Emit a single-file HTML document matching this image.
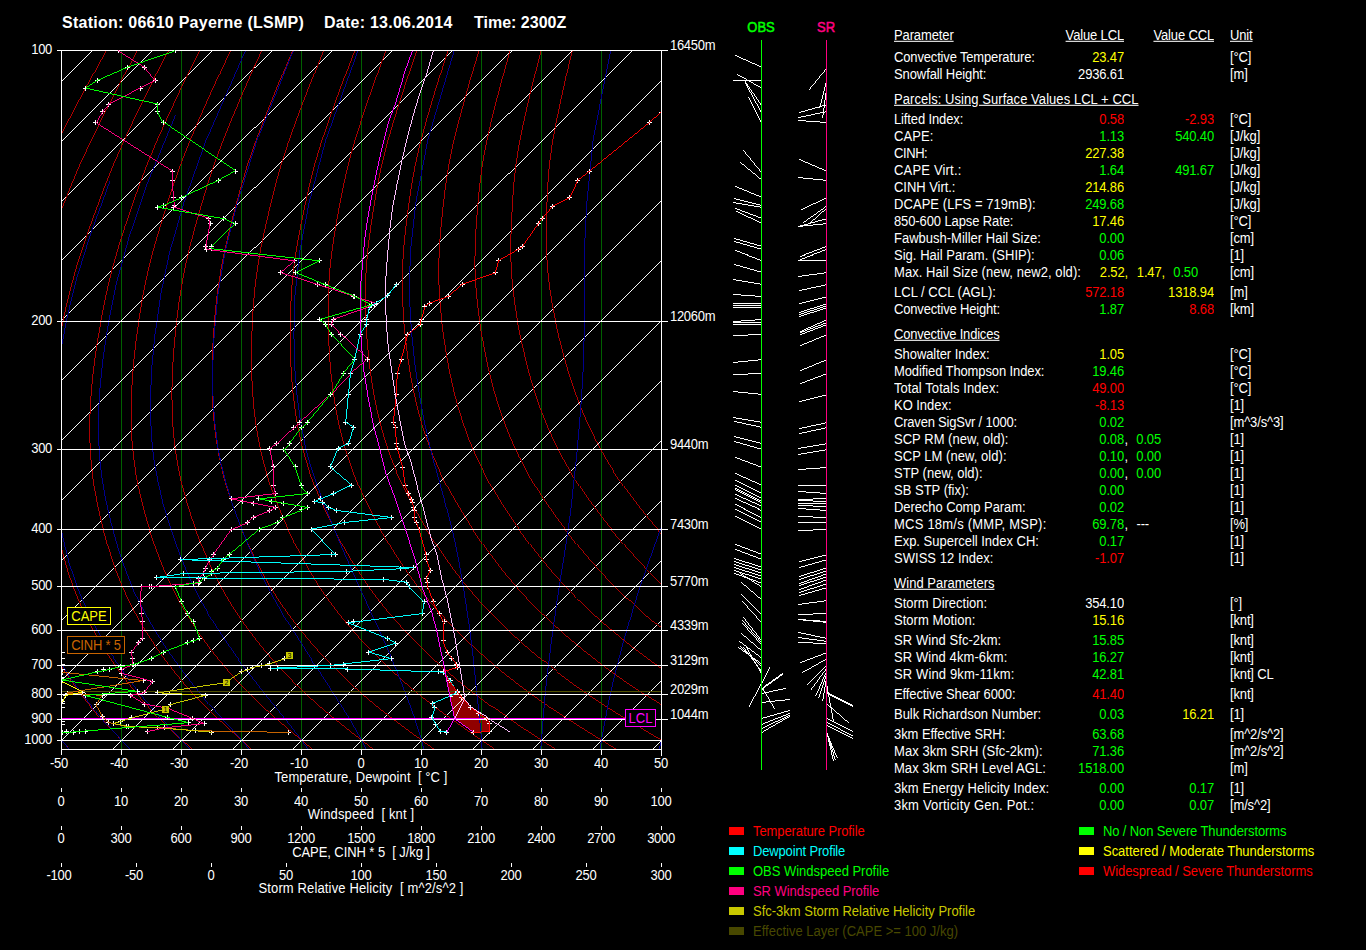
<!DOCTYPE html><html><head><meta charset="utf-8"><title>Sounding 06610 Payerne</title>
<style>
html,body{margin:0;padding:0;background:#000;}
body{width:1366px;height:950px;overflow:hidden;position:relative;font-family:"Liberation Sans",sans-serif;color:#fff;}
.t{position:absolute;white-space:pre;font-size:13px;line-height:15px;height:15px;transform:scaleY(1.06);transform-origin:50% 0;}
.p{letter-spacing:-0.15px;}
.r{text-align:right;}
.c{text-align:center;}
.u{text-decoration:underline;text-underline-offset:1px;}
.ax{font-size:13px;transform:scaleY(1.08);transform-origin:50% 80%;}
.g{color:#00ff00}.y{color:#ffff00}.rd{color:#ff0000}
svg{position:absolute;left:0;top:0;}
.sw{position:absolute;width:15px;height:8px;}
</style></head><body>
<svg width="1366" height="950" viewBox="0 0 1366 950" shape-rendering="crispEdges">
<defs><clipPath id="cp"><rect x="61" y="50" width="601" height="700"/></clipPath></defs>
<g clip-path="url(#cp)">
<polygon points="473.4,732.2 489.0,731.8 489.5,723.2 486.8,718.7 478.8,713.4 470.7,707.1 461.8,697.3 457.3,691.9 449.2,680.6 444.5,672.0 447.4,683.8 451.0,701.7 454.6,718.7" fill="#900000" stroke="none"/>
<line x1="121.5" y1="50.5" x2="121.5" y2="749.5" stroke="#006000" stroke-width="1"/>
<line x1="181.5" y1="50.5" x2="181.5" y2="749.5" stroke="#006000" stroke-width="1"/>
<line x1="241.5" y1="50.5" x2="241.5" y2="749.5" stroke="#006000" stroke-width="1"/>
<line x1="301.5" y1="50.5" x2="301.5" y2="749.5" stroke="#006000" stroke-width="1"/>
<line x1="361.5" y1="50.5" x2="361.5" y2="749.5" stroke="#006000" stroke-width="1"/>
<line x1="421.5" y1="50.5" x2="421.5" y2="749.5" stroke="#006000" stroke-width="1"/>
<line x1="481.5" y1="50.5" x2="481.5" y2="749.5" stroke="#006000" stroke-width="1"/>
<line x1="541.5" y1="50.5" x2="541.5" y2="749.5" stroke="#006000" stroke-width="1"/>
<line x1="601.5" y1="50.5" x2="601.5" y2="749.5" stroke="#006000" stroke-width="1"/>
<line x1="-667.5" y1="749.5" x2="31.5" y2="50.5" stroke="#ffffff" stroke-width="0.99"/>
<line x1="-607.5" y1="749.5" x2="91.5" y2="50.5" stroke="#ffffff" stroke-width="0.99"/>
<line x1="-547.5" y1="749.5" x2="151.5" y2="50.5" stroke="#ffffff" stroke-width="0.99"/>
<line x1="-487.5" y1="749.5" x2="211.5" y2="50.5" stroke="#ffffff" stroke-width="0.99"/>
<line x1="-427.5" y1="749.5" x2="271.5" y2="50.5" stroke="#ffffff" stroke-width="0.99"/>
<line x1="-367.5" y1="749.5" x2="331.5" y2="50.5" stroke="#ffffff" stroke-width="0.99"/>
<line x1="-307.5" y1="749.5" x2="391.5" y2="50.5" stroke="#ffffff" stroke-width="0.99"/>
<line x1="-247.5" y1="749.5" x2="451.5" y2="50.5" stroke="#ffffff" stroke-width="0.99"/>
<line x1="-187.5" y1="749.5" x2="511.5" y2="50.5" stroke="#ffffff" stroke-width="0.99"/>
<line x1="-127.5" y1="749.5" x2="571.5" y2="50.5" stroke="#ffffff" stroke-width="0.99"/>
<line x1="-67.5" y1="749.5" x2="631.5" y2="50.5" stroke="#ffffff" stroke-width="0.99"/>
<line x1="-7.5" y1="749.5" x2="691.5" y2="50.5" stroke="#ffffff" stroke-width="0.99"/>
<line x1="52.5" y1="749.5" x2="751.5" y2="50.5" stroke="#ffffff" stroke-width="0.99"/>
<line x1="112.5" y1="749.5" x2="811.5" y2="50.5" stroke="#ffffff" stroke-width="0.99"/>
<line x1="172.5" y1="749.5" x2="871.5" y2="50.5" stroke="#ffffff" stroke-width="0.99"/>
<line x1="232.5" y1="749.5" x2="931.5" y2="50.5" stroke="#ffffff" stroke-width="0.99"/>
<line x1="292.5" y1="749.5" x2="991.5" y2="50.5" stroke="#ffffff" stroke-width="0.99"/>
<line x1="352.5" y1="749.5" x2="1051.5" y2="50.5" stroke="#ffffff" stroke-width="0.99"/>
<line x1="412.5" y1="749.5" x2="1111.5" y2="50.5" stroke="#ffffff" stroke-width="0.99"/>
<line x1="472.5" y1="749.5" x2="1171.5" y2="50.5" stroke="#ffffff" stroke-width="0.99"/>
<line x1="532.5" y1="749.5" x2="1231.5" y2="50.5" stroke="#ffffff" stroke-width="0.99"/>
<line x1="592.5" y1="749.5" x2="1291.5" y2="50.5" stroke="#ffffff" stroke-width="0.99"/>
<line x1="652.5" y1="749.5" x2="1351.5" y2="50.5" stroke="#ffffff" stroke-width="0.99"/>
<polyline points="105.8,50.5 93.3,73.7 80.9,96.9 68.6,120.2 56.8,143.2 46.2,165.1 36.8,186.0 28.1,206.4 19.6,226.8 11.6,246.9 4.3,266.4 -2.1,285.3 -7.8,303.6 -13.0,321.5 -17.7,339.3 -22.1,356.9 -26.1,374.3 -29.5,391.4 -32.5,408.1 -34.9,424.6 -36.7,440.6 -37.8,456.3 -38.3,471.5 -38.3,486.3 -37.7,500.9 -36.7,515.3 -35.3,529.5 -33.5,543.7 -31.4,557.6 -28.8,571.4 -25.7,584.9 -22.1,598.2 -17.9,611.1 -13.1,623.7 -7.9,636.1 -2.2,648.4 4.0,660.4 10.6,672.2 17.8,683.9 25.4,695.3 33.6,706.5 42.3,717.4 51.3,728.3 60.7,739.2 70.3,750.2" fill="none" stroke="#b00000" stroke-width="0.99" />
<polyline points="136.9,50.5 124.8,73.7 112.9,96.9 101.1,120.2 89.9,143.2 79.7,165.1 70.9,186.0 62.7,206.4 54.7,226.8 47.2,246.9 40.5,266.4 34.6,285.3 29.5,303.6 24.9,321.5 20.7,339.3 17.0,356.9 13.6,374.3 10.8,391.4 8.4,408.1 6.7,424.6 5.5,440.6 5.0,456.3 5.2,471.5 5.9,486.3 7.1,500.9 8.8,515.3 10.9,529.5 13.4,543.7 16.2,557.6 19.6,571.4 23.4,584.9 27.8,598.2 32.8,611.1 38.3,623.7 44.3,636.1 50.9,648.4 57.8,660.4 65.3,672.2 73.3,683.9 81.8,695.3 90.8,706.5 100.4,717.4 110.3,728.3 120.6,739.2 131.1,750.2" fill="none" stroke="#b00000" stroke-width="0.99" />
<polyline points="168.0,50.5 156.4,73.7 144.9,96.9 133.6,120.2 122.9,143.2 113.3,165.1 104.9,186.0 97.3,206.4 89.8,226.8 82.9,246.9 76.7,266.4 71.4,285.3 66.8,303.6 62.8,321.5 59.2,339.3 56.0,356.9 53.3,374.3 51.0,391.4 49.3,408.1 48.2,424.6 47.7,440.6 47.8,456.3 48.6,471.5 50.0,486.3 52.0,500.9 54.4,515.3 57.2,529.5 60.3,543.7 63.9,557.6 67.9,571.4 72.5,584.9 77.7,598.2 83.5,611.1 89.8,623.7 96.6,636.1 103.9,648.4 111.7,660.4 120.0,672.2 128.8,683.9 138.1,695.3 148.1,706.5 158.5,717.4 169.3,728.3 180.5,739.2 192.0,750.2" fill="none" stroke="#b00000" stroke-width="0.99" />
<polyline points="199.0,50.5 187.9,73.7 177.0,96.9 166.2,120.2 155.9,143.2 146.8,165.1 139.0,186.0 131.8,206.4 124.9,226.8 118.5,246.9 112.9,266.4 108.2,285.3 104.2,303.6 100.7,321.5 97.7,339.3 95.1,356.9 93.0,374.3 91.3,391.4 90.2,408.1 89.7,424.6 89.9,440.6 90.7,456.3 92.1,471.5 94.2,486.3 96.8,500.9 99.9,515.3 103.4,529.5 107.3,543.7 111.6,557.6 116.3,571.4 121.7,584.9 127.6,598.2 134.1,611.1 141.2,623.7 148.8,636.1 156.9,648.4 165.5,660.4 174.7,672.2 184.3,683.9 194.5,695.3 205.3,706.5 216.6,717.4 228.4,728.3 240.4,739.2 252.8,750.2" fill="none" stroke="#b00000" stroke-width="0.99" />
<polyline points="230.1,50.5 219.5,73.7 209.0,96.9 198.7,120.2 189.0,143.2 180.4,165.1 173.0,186.0 166.4,206.4 160.1,226.8 154.2,246.9 149.1,266.4 144.9,285.3 141.5,303.6 138.6,321.5 136.2,339.3 134.2,356.9 132.7,374.3 131.6,391.4 131.1,408.1 131.3,424.6 132.0,440.6 133.5,456.3 135.6,471.5 138.3,486.3 141.6,500.9 145.4,515.3 149.6,529.5 154.2,543.7 159.2,557.6 164.7,571.4 170.8,584.9 177.5,598.2 184.8,611.1 192.6,623.7 201.0,636.1 209.9,648.4 219.4,660.4 229.3,672.2 239.8,683.9 250.9,695.3 262.6,706.5 274.7,717.4 287.4,728.3 300.4,739.2 313.7,750.2" fill="none" stroke="#b00000" stroke-width="0.99" />
<polyline points="261.2,50.5 251.1,73.7 241.1,96.9 231.2,120.2 222.0,143.2 213.9,165.1 207.1,186.0 201.0,206.4 195.2,226.8 189.8,246.9 185.3,266.4 181.7,285.3 178.8,303.6 176.5,321.5 174.7,339.3 173.3,356.9 172.3,374.3 171.9,391.4 172.1,408.1 172.8,424.6 174.2,440.6 176.3,456.3 179.1,471.5 182.5,486.3 186.5,500.9 190.9,515.3 195.8,529.5 201.1,543.7 206.9,557.6 213.1,571.4 219.9,584.9 227.4,598.2 235.4,611.1 244.1,623.7 253.3,636.1 263.0,648.4 273.2,660.4 284.0,672.2 295.3,683.9 307.3,695.3 319.8,706.5 332.9,717.4 346.4,728.3 360.3,739.2 374.5,750.2" fill="none" stroke="#b00000" stroke-width="0.99" />
<polyline points="292.3,50.5 282.6,73.7 273.1,96.9 263.8,120.2 255.0,143.2 247.4,165.1 241.2,186.0 235.6,206.4 230.3,226.8 225.5,246.9 221.5,266.4 218.4,285.3 216.1,303.6 214.4,321.5 213.2,339.3 212.3,356.9 212.0,374.3 212.2,391.4 213.0,408.1 214.3,424.6 216.4,440.6 219.1,456.3 222.6,471.5 226.6,486.3 231.3,500.9 236.4,515.3 242.0,529.5 248.1,543.7 254.5,557.6 261.5,571.4 269.1,584.9 277.3,598.2 286.1,611.1 295.5,623.7 305.5,636.1 316.0,648.4 327.1,660.4 338.7,672.2 350.9,683.9 363.6,695.3 377.0,706.5 391.0,717.4 405.4,728.3 420.2,739.2 435.3,750.2" fill="none" stroke="#b00000" stroke-width="0.99" />
<polyline points="323.3,50.5 314.2,73.7 305.1,96.9 296.3,120.2 288.1,143.2 281.0,165.1 275.2,186.0 270.2,206.4 265.4,226.8 261.1,246.9 257.7,266.4 255.2,285.3 253.5,303.6 252.3,321.5 251.7,339.3 251.4,356.9 251.7,374.3 252.5,391.4 253.9,408.1 255.9,424.6 258.6,440.6 262.0,456.3 266.1,471.5 270.8,486.3 276.1,500.9 282.0,515.3 288.3,529.5 295.0,543.7 302.2,557.6 309.9,571.4 318.2,584.9 327.1,598.2 336.7,611.1 346.9,623.7 357.7,636.1 369.0,648.4 380.9,660.4 393.4,672.2 406.4,683.9 420.0,695.3 434.3,706.5 449.1,717.4 464.4,728.3 480.1,739.2 496.2,750.2" fill="none" stroke="#b00000" stroke-width="0.99" />
<polyline points="354.4,50.5 345.7,73.7 337.2,96.9 328.8,120.2 321.1,143.2 314.5,165.1 309.3,186.0 304.8,206.4 300.5,226.8 296.8,246.9 293.9,266.4 292.0,285.3 290.8,303.6 290.2,321.5 290.1,339.3 290.5,356.9 291.4,374.3 292.8,391.4 294.8,408.1 297.4,424.6 300.7,440.6 304.8,456.3 309.5,471.5 314.9,486.3 321.0,500.9 327.5,515.3 334.5,529.5 341.9,543.7 349.8,557.6 358.3,571.4 367.3,584.9 377.0,598.2 387.4,611.1 398.4,623.7 409.9,636.1 422.1,648.4 434.8,660.4 448.0,672.2 461.9,683.9 476.4,695.3 491.5,706.5 507.2,717.4 523.4,728.3 540.0,739.2 557.0,750.2" fill="none" stroke="#b00000" stroke-width="0.99" />
<polyline points="385.5,50.5 377.3,73.7 369.2,96.9 361.4,120.2 354.1,143.2 348.1,165.1 343.3,186.0 339.3,206.4 335.6,226.8 332.5,246.9 330.1,266.4 328.7,285.3 328.1,303.6 328.1,321.5 328.6,339.3 329.6,356.9 331.0,374.3 333.1,391.4 335.7,408.1 339.0,424.6 342.9,440.6 347.6,456.3 353.0,471.5 359.1,486.3 365.8,500.9 373.0,515.3 380.7,529.5 388.9,543.7 397.5,557.6 406.7,571.4 416.5,584.9 426.9,598.2 438.0,611.1 449.8,623.7 462.2,636.1 475.1,648.4 488.6,660.4 502.7,672.2 517.4,683.9 532.7,695.3 548.7,706.5 565.3,717.4 582.4,728.3 600.0,739.2 617.9,750.2" fill="none" stroke="#b00000" stroke-width="0.99" />
<polyline points="416.6,50.5 408.8,73.7 401.3,96.9 393.9,120.2 387.2,143.2 381.6,165.1 377.4,186.0 373.9,206.4 370.8,226.8 368.1,246.9 366.3,266.4 365.5,285.3 365.5,303.6 366.0,321.5 367.1,339.3 368.6,356.9 370.7,374.3 373.3,391.4 376.6,408.1 380.5,424.6 385.1,440.6 390.4,456.3 396.5,471.5 403.3,486.3 410.6,500.9 418.5,515.3 426.9,529.5 435.8,543.7 445.1,557.6 455.1,571.4 465.6,584.9 476.8,598.2 488.7,611.1 501.2,623.7 514.4,636.1 528.1,648.4 542.5,660.4 557.4,672.2 572.9,683.9 589.1,695.3 606.0,706.5 623.5,717.4 641.4,728.3 659.9,739.2 678.7,750.2" fill="none" stroke="#b00000" stroke-width="0.99" />
<polyline points="447.7,50.5 440.4,73.7 433.3,96.9 426.5,120.2 420.2,143.2 415.2,165.1 411.5,186.0 408.5,206.4 405.9,226.8 403.8,246.9 402.5,266.4 402.2,285.3 402.8,303.6 403.9,321.5 405.6,339.3 407.7,356.9 410.4,374.3 413.6,391.4 417.5,408.1 422.0,424.6 427.3,440.6 433.3,456.3 440.0,471.5 447.4,486.3 455.5,500.9 464.1,515.3 473.2,529.5 482.7,543.7 492.8,557.6 503.4,571.4 514.7,584.9 526.7,598.2 539.4,611.1 552.7,623.7 566.6,636.1 581.2,648.4 596.3,660.4 612.1,672.2 628.4,683.9 645.5,695.3 663.2,706.5 681.6,717.4 700.5,728.3 719.8,739.2 739.6,750.2" fill="none" stroke="#b00000" stroke-width="0.99" />
<polyline points="478.7,50.5 471.9,73.7 465.4,96.9 459.0,120.2 453.2,143.2 448.7,165.1 445.5,186.0 443.1,206.4 441.0,226.8 439.4,246.9 438.7,266.4 439.0,285.3 440.1,303.6 441.8,321.5 444.1,339.3 446.8,356.9 450.1,374.3 453.9,391.4 458.4,408.1 463.6,424.6 469.4,440.6 476.1,456.3 483.5,471.5 491.6,486.3 500.3,500.9 509.6,515.3 519.4,529.5 529.7,543.7 540.5,557.6 551.8,571.4 563.9,584.9 576.6,598.2 590.0,611.1 604.1,623.7 618.8,636.1 634.2,648.4 650.2,660.4 666.7,672.2 684.0,683.9 701.9,695.3 720.5,706.5 739.7,717.4 759.5,728.3 779.7,739.2 800.4,750.2" fill="none" stroke="#b00000" stroke-width="0.99" />
<polyline points="509.8,50.5 503.5,73.7 497.4,96.9 491.5,120.2 486.3,143.2 482.2,165.1 479.6,186.0 477.7,206.4 476.1,226.8 475.1,246.9 474.9,266.4 475.8,285.3 477.4,303.6 479.7,321.5 482.6,339.3 485.9,356.9 489.7,374.3 494.2,391.4 499.3,408.1 505.1,424.6 511.6,440.6 518.9,456.3 527.0,471.5 535.7,486.3 545.1,500.9 555.1,515.3 565.6,529.5 576.6,543.7 588.1,557.6 600.2,571.4 613.0,584.9 626.5,598.2 640.7,611.1 655.5,623.7 671.1,636.1 687.2,648.4 704.0,660.4 721.4,672.2 739.5,683.9 758.2,695.3 777.7,706.5 797.8,717.4 818.5,728.3 839.6,739.2 861.2,750.2" fill="none" stroke="#b00000" stroke-width="0.99" />
<polyline points="540.9,50.5 535.1,73.7 529.4,96.9 524.1,120.2 519.3,143.2 515.8,165.1 513.6,186.0 512.3,206.4 511.2,226.8 510.7,246.9 511.1,266.4 512.5,285.3 514.8,303.6 517.6,321.5 521.0,339.3 525.0,356.9 529.4,374.3 534.5,391.4 540.2,408.1 546.6,424.6 553.8,440.6 561.7,456.3 570.4,471.5 579.9,486.3 589.9,500.9 600.6,515.3 611.8,529.5 623.5,543.7 635.8,557.6 648.6,571.4 662.1,584.9 676.4,598.2 691.3,611.1 707.0,623.7 723.3,636.1 740.3,648.4 757.9,660.4 776.1,672.2 795.0,683.9 814.6,695.3 834.9,706.5 855.9,717.4 877.5,728.3 899.6,739.2 922.1,750.2" fill="none" stroke="#b00000" stroke-width="0.99" />
<polyline points="572.0,50.5 566.6,73.7 561.5,96.9 556.6,120.2 552.3,143.2 549.3,165.1 547.7,186.0 546.8,206.4 546.3,226.8 546.4,246.9 547.3,266.4 549.3,285.3 552.1,303.6 555.6,321.5 559.5,339.3 564.0,356.9 569.1,374.3 574.8,391.4 581.1,408.1 588.2,424.6 596.0,440.6 604.6,456.3 613.9,471.5 624.0,486.3 634.8,500.9 646.1,515.3 658.0,529.5 670.5,543.7 683.4,557.6 697.0,571.4 711.3,584.9 726.3,598.2 742.0,611.1 758.4,623.7 775.5,636.1 793.3,648.4 811.7,660.4 830.8,672.2 850.5,683.9 871.0,695.3 892.2,706.5 914.0,717.4 936.5,728.3 959.5,739.2 982.9,750.2" fill="none" stroke="#b00000" stroke-width="0.99" />
<polyline points="70.1,750.2 66.7,746.3 63.2,742.2 59.8,738.1 56.6,734.4 53.0,730.2 49.4,725.8 45.8,721.4 42.1,716.9 38.5,712.2 35.1,707.9 31.4,703.0 27.8,698.0 24.1,692.7 20.5,687.3 16.9,681.6 13.6,676.4 10.1,670.3 6.6,664.0 3.1,657.5 -0.4,650.8 -3.8,643.7 -7.1,636.4 -10.1,629.5 -13.3,621.6 -16.4,613.2 -19.4,604.5 -22.3,595.3 -24.9,585.5 -27.1,576.2 -29.3,565.3 -31.3,553.8 -33.1,541.6 -34.7,528.7 -36.0,515.0 -36.9,502.0 -37.5,486.5 -37.6,469.7 -36.8,451.3 -34.9,431.0 -31.8,408.5 -27.8,386.1 -21.7,358.5 -13.9,327.6 -3.8,292.8" fill="none" stroke="#000090" stroke-width="0.99" />
<polyline points="130.6,750.2 127.0,746.3 123.3,742.2 119.6,738.1 115.5,733.6 111.7,729.3 107.8,725.0 103.9,720.5 99.9,716.0 96.0,711.3 91.9,706.5 87.5,701.0 83.5,695.9 79.5,690.6 75.5,685.0 71.5,679.3 67.5,673.4 63.6,667.2 59.6,660.8 55.3,653.5 51.4,646.6 47.6,639.4 43.8,631.8 40.1,624.0 36.4,615.8 32.8,607.2 29.1,597.1 25.8,587.5 22.8,577.3 19.9,566.5 17.3,555.0 14.9,542.9 12.6,530.0 10.6,516.4 8.7,500.5 7.4,484.9 6.6,467.9 6.7,449.4 7.8,428.9 10.2,406.1 14.0,380.8 20.0,349.6 27.4,317.6 37.3,281.3 51.9,238.1" fill="none" stroke="#000090" stroke-width="0.99" />
<polyline points="190.7,750.2 187.1,746.3 183.0,741.8 179.2,737.7 175.0,733.1 171.0,728.9 167.0,724.5 162.5,719.6 158.4,715.0 154.2,710.3 149.5,705.0 145.2,700.0 140.5,694.3 136.2,688.9 131.9,683.3 127.1,676.9 122.8,670.9 118.0,664.0 113.7,657.5 109.4,650.8 104.6,643.0 100.3,635.6 96.1,628.0 91.5,619.1 87.4,610.7 82.9,600.8 79.0,591.4 75.3,581.4 71.5,569.8 68.1,558.5 64.7,545.3 61.8,532.6 59.0,519.2 56.2,503.5 54.1,488.1 52.3,469.7 51.4,451.3 51.6,431.0 53.1,406.1 55.9,380.8 60.3,352.6 67.1,317.6 75.8,281.3 90.8,233.3 110.0,181.0" fill="none" stroke="#000090" stroke-width="0.99" />
<polyline points="250.1,750.2 246.4,745.9 242.9,741.8 239.0,737.3 235.3,733.1 231.1,728.4 226.8,723.6 222.8,719.2 218.3,714.1 213.6,708.9 209.3,704.0 204.5,698.5 200.1,693.2 195.2,687.3 190.2,681.0 185.7,675.2 180.6,668.4 176.0,662.1 170.9,654.8 165.7,647.3 161.0,640.1 155.8,631.8 150.7,623.2 146.0,614.9 141.0,605.4 136.5,596.2 131.7,585.5 127.1,574.1 123.0,563.1 118.8,550.2 115.1,537.8 111.2,523.3 107.5,507.9 104.4,492.8 101.5,474.9 99.6,457.0 98.4,435.3 98.6,410.9 100.1,386.1 103.4,355.6 108.8,321.0 115.9,285.2 128.8,238.1 146.0,186.6 175.5,115.1" fill="none" stroke="#000090" stroke-width="0.99" />
<polyline points="308.6,750.2 305.6,745.9 302.4,741.4 299.4,737.3 295.9,732.7 292.3,728.0 288.5,723.2 284.5,718.2 280.8,713.6 276.6,708.4 272.2,703.0 267.7,697.4 263.1,691.6 258.8,686.1 254.0,679.9 249.0,673.4 244.0,666.6 238.8,659.5 234.0,652.8 228.7,645.1 223.2,637.1 217.7,628.7 212.2,619.9 207.2,611.5 201.6,601.8 196.2,591.4 190.8,580.4 186.0,569.8 181.0,557.3 176.0,544.1 171.2,530.0 166.5,515.0 162.4,500.5 158.3,483.2 154.7,464.4 152.1,443.5 150.6,420.1 150.5,396.3 151.8,367.1 155.0,334.1 160.3,296.5 169.7,252.0 183.9,202.8 207.3,136.8 245.0,50.5" fill="none" stroke="#000090" stroke-width="0.99" />
<polyline points="366.5,750.2 364.4,745.9 362.1,741.4 360.0,737.3 357.5,732.7 354.8,728.0 352.0,723.2 349.1,718.2 346.3,713.6 343.0,708.4 339.6,703.0 336.0,697.4 332.3,691.6 328.8,686.1 324.8,679.9 320.6,673.4 316.3,666.6 311.7,659.5 307.4,652.8 302.5,645.1 297.4,637.1 292.1,628.7 286.6,619.9 281.5,611.5 275.8,601.8 270.1,591.4 264.3,580.4 259.1,569.8 253.4,557.3 247.7,544.1 242.0,530.0 236.4,515.0 231.4,500.5 226.1,483.2 221.3,464.4 217.4,443.5 214.5,420.1 213.0,396.3 212.7,367.1 214.2,334.1 217.6,296.5 225.1,252.0 237.3,202.8 258.1,136.8 293.0,50.5" fill="none" stroke="#000090" stroke-width="0.99" />
<polyline points="424.2,750.2 423.0,745.9 421.8,741.4 420.7,737.3 419.3,732.7 417.8,728.0 416.2,723.2 414.6,718.2 413.0,713.6 411.1,708.4 409.1,703.0 407.0,697.4 404.8,691.6 402.7,686.1 400.3,679.9 397.8,673.4 395.1,666.6 392.2,659.5 389.3,652.8 386.0,645.1 382.5,637.1 378.7,628.7 374.7,619.9 370.8,611.5 366.2,601.8 361.4,591.4 356.4,580.4 351.6,569.8 346.2,557.3 340.5,544.1 334.6,530.0 328.4,515.0 322.7,500.5 316.4,483.2 310.3,464.4 304.9,443.5 300.3,420.1 297.1,396.3 294.7,367.1 293.9,334.1 294.9,296.5 299.6,252.0 309.1,202.8 326.6,136.8 357.7,50.5" fill="none" stroke="#000090" stroke-width="0.99" />
<polyline points="482.1,750.2 481.9,745.9 481.6,741.4 481.3,737.3 480.9,732.7 480.5,728.0 480.0,723.2 479.5,718.2 479.1,713.6 478.5,708.4 477.9,703.0 477.3,697.4 476.7,691.6 476.1,686.1 475.5,679.9 474.8,673.4 474.1,666.6 473.4,659.5 472.6,652.8 471.7,645.1 470.7,637.1 469.6,628.7 468.4,619.9 467.1,611.5 465.6,601.8 464.0,591.4 462.2,580.4 460.3,569.8 458.1,557.3 455.4,544.1 452.3,530.0 448.5,515.0 444.6,500.5 439.8,483.2 434.6,464.4 429.3,443.5 424.0,420.1 419.6,396.3 415.2,367.1 411.7,334.1 409.4,296.5 410.3,252.0 415.8,202.8 428.4,136.8 453.9,50.5" fill="none" stroke="#000090" stroke-width="0.99" />
<polyline points="540.6,750.2 541.0,745.9 541.4,741.4 541.7,737.3 542.1,732.7 542.5,728.0 542.8,723.2 543.2,718.2 543.6,713.6 544.0,708.4 544.4,703.0 544.9,697.4 545.4,691.6 546.0,686.1 546.7,679.9 547.4,673.4 548.2,666.6 549.1,659.5 550.0,652.8 550.9,645.1 552.0,637.1 553.1,628.7 554.3,619.9 555.5,611.5 556.9,601.8 558.5,591.4 560.2,580.4 561.9,569.8 563.9,557.3 566.0,544.1 568.1,530.0 570.1,515.0 571.8,500.5 573.7,483.2 575.7,464.4 577.7,443.5 579.8,420.1 581.6,396.3 583.3,367.1 584.2,334.1 584.0,296.5 584.3,252.0 586.8,202.8 593.4,136.8 610.5,50.5" fill="none" stroke="#000090" stroke-width="0.99" />
<polyline points="599.7,750.2 600.5,745.9 601.3,741.4 602.0,737.3 602.9,732.7 603.7,728.0 604.6,723.2 605.5,718.2 606.4,713.6 607.4,708.4 608.5,703.0 609.6,697.4 610.9,691.6 612.1,686.1 613.6,679.9 615.2,673.4 616.9,666.6 618.7,659.5 620.5,652.8 622.5,645.1 624.8,637.1 627.1,628.7 629.7,619.9 632.3,611.5 635.3,601.8 638.6,591.4 642.3,580.4 646.0,569.8 650.4,557.3 655.1,544.1 660.2,530.0 665.7,515.0 671.1,500.5 677.5,483.2 684.8,464.4 693.1,443.5 702.7,420.1 712.8,396.3 725.3,367.1 739.4,334.1 755.1,296.5 774.0,252.0 794.9,202.8 821.8,136.8 855.2,50.5" fill="none" stroke="#000090" stroke-width="0.99" />
<polyline points="659.1,750.2 660.1,745.9 661.2,741.4 662.2,737.3 663.3,732.7 664.4,728.0 665.6,723.2 666.8,718.2 668.0,713.6 669.3,708.4 670.7,703.0 672.2,697.4 673.8,691.6 675.4,686.1 677.3,679.9 679.3,673.4 681.5,666.6 683.8,659.5 686.0,652.8 688.6,645.1 691.4,637.1 694.4,628.7 697.7,619.9 700.9,611.5 704.6,601.8 708.8,591.4 713.4,580.4 717.9,569.8 723.3,557.3 729.2,544.1 735.6,530.0 742.5,515.0 749.3,500.5 757.6,483.2 766.8,464.4 777.5,443.5 789.9,420.1 802.8,396.3 819.2,367.1 838.1,334.1 859.9,296.5 886.7,252.0 917.5,202.8 960.0,136.8 1017.7,50.5" fill="none" stroke="#000090" stroke-width="0.99" />
</g>
<line x1="56.5" y1="50.5" x2="667.5" y2="50.5" stroke="#ffffff" stroke-width="1"/>
<line x1="56.5" y1="321.5" x2="667.5" y2="321.5" stroke="#ffffff" stroke-width="1"/>
<line x1="56.5" y1="449.5" x2="667.5" y2="449.5" stroke="#ffffff" stroke-width="1"/>
<line x1="56.5" y1="529.5" x2="667.5" y2="529.5" stroke="#ffffff" stroke-width="1"/>
<line x1="56.5" y1="586.5" x2="667.5" y2="586.5" stroke="#ffffff" stroke-width="1"/>
<line x1="56.5" y1="630.5" x2="667.5" y2="630.5" stroke="#ffffff" stroke-width="1"/>
<line x1="56.5" y1="665.5" x2="667.5" y2="665.5" stroke="#ffffff" stroke-width="1"/>
<line x1="56.5" y1="694.5" x2="667.5" y2="694.5" stroke="#ffffff" stroke-width="1"/>
<line x1="56.5" y1="719.5" x2="667.5" y2="719.5" stroke="#ffffff" stroke-width="1"/>
<line x1="56.5" y1="740.5" x2="661.5" y2="740.5" stroke="#ffffff" stroke-width="1"/>
<defs><clipPath id="cp2"><rect x="61" y="50" width="601" height="700"/></clipPath></defs>
<g clip-path="url(#cp2)">
<line x1="61.5" y1="691.5" x2="661.5" y2="691.5" stroke="#505000" stroke-width="1"/>
<line x1="61.5" y1="718.5" x2="625.5" y2="718.5" stroke="#ff00ff" stroke-width="1"/>
<path d="M60 672.5h5M62.5 670v5" stroke="#fff" stroke-width="1"/>
<path d="M141 680.5h5M143.5 678v5" stroke="#fff" stroke-width="1"/>
<path d="M65 693.5h5M67.5 691v5" stroke="#fff" stroke-width="1"/>
<path d="M100 695.5h5M102.5 693v5" stroke="#fff" stroke-width="1"/>
<path d="M94 704.5h5M96.5 702v5" stroke="#fff" stroke-width="1"/>
<path d="M100 716.5h5M102.5 714v5" stroke="#fff" stroke-width="1"/>
<path d="M106 722.5h5M108.5 720v5" stroke="#fff" stroke-width="1"/>
<path d="M124 726.5h5M126.5 724v5" stroke="#fff" stroke-width="1"/>
<path d="M155 727.5h5M157.5 725v5" stroke="#fff" stroke-width="1"/>
<path d="M193 730.5h5M195.5 728v5" stroke="#fff" stroke-width="1"/>
<path d="M286 732.5h5M288.5 730v5" stroke="#fff" stroke-width="1"/>
<path d="M59 677.5h5M61.5 675v5" stroke="#fff" stroke-width="1"/>
<path d="M59 682.5h5M61.5 680v5" stroke="#fff" stroke-width="1"/>
<path d="M80 692.5h5M82.5 690v5" stroke="#fff" stroke-width="1"/>
<path d="M63 695.5h5M65.5 693v5" stroke="#fff" stroke-width="1"/>
<path d="M60 701.5h5M62.5 699v5" stroke="#fff" stroke-width="1"/>
<path d="M287 655.5h5M289.5 653v5" stroke="#fff" stroke-width="1"/>
<path d="M282 658.5h5M284.5 656v5" stroke="#fff" stroke-width="1"/>
<path d="M267 663.5h5M269.5 661v5" stroke="#fff" stroke-width="1"/>
<path d="M259 665.5h5M261.5 663v5" stroke="#fff" stroke-width="1"/>
<path d="M250 667.5h5M252.5 665v5" stroke="#fff" stroke-width="1"/>
<path d="M245 669.5h5M247.5 667v5" stroke="#fff" stroke-width="1"/>
<path d="M239 671.5h5M241.5 669v5" stroke="#fff" stroke-width="1"/>
<path d="M223 682.5h5M225.5 680v5" stroke="#fff" stroke-width="1"/>
<path d="M155 692.5h5M157.5 690v5" stroke="#fff" stroke-width="1"/>
<path d="M203 695.5h5M205.5 693v5" stroke="#fff" stroke-width="1"/>
<path d="M168 704.5h5M170.5 702v5" stroke="#fff" stroke-width="1"/>
<path d="M162 709.5h5M164.5 707v5" stroke="#fff" stroke-width="1"/>
<path d="M129 717.5h5M131.5 715v5" stroke="#fff" stroke-width="1"/>
<path d="M118 721.5h5M120.5 719v5" stroke="#fff" stroke-width="1"/>
<path d="M111 723.5h5M113.5 721v5" stroke="#fff" stroke-width="1"/>
<path d="M126 726.5h5M128.5 724v5" stroke="#fff" stroke-width="1"/>
<path d="M155 727.5h5M157.5 725v5" stroke="#fff" stroke-width="1"/>
<path d="M209 732.5h5M211.5 730v5" stroke="#fff" stroke-width="1"/>
<path d="M116 50.5h5M118.5 48v5" stroke="#fff" stroke-width="1"/>
<path d="M142 67.5h5M144.5 65v5" stroke="#fff" stroke-width="1"/>
<path d="M153 80.5h5M155.5 78v5" stroke="#fff" stroke-width="1"/>
<path d="M138 88.5h5M140.5 86v5" stroke="#fff" stroke-width="1"/>
<path d="M106 104.5h5M108.5 102v5" stroke="#fff" stroke-width="1"/>
<path d="M100 111.5h5M102.5 109v5" stroke="#fff" stroke-width="1"/>
<path d="M93 122.5h5M95.5 120v5" stroke="#fff" stroke-width="1"/>
<path d="M170 171.5h5M172.5 169v5" stroke="#fff" stroke-width="1"/>
<path d="M170 180.5h5M172.5 178v5" stroke="#fff" stroke-width="1"/>
<path d="M171 197.5h5M173.5 195v5" stroke="#fff" stroke-width="1"/>
<path d="M172 205.5h5M174.5 203v5" stroke="#fff" stroke-width="1"/>
<path d="M171 207.5h5M173.5 205v5" stroke="#fff" stroke-width="1"/>
<path d="M206 218.5h5M208.5 216v5" stroke="#fff" stroke-width="1"/>
<path d="M208 223.5h5M210.5 221v5" stroke="#fff" stroke-width="1"/>
<path d="M203 246.5h5M205.5 244v5" stroke="#fff" stroke-width="1"/>
<path d="M204 249.5h5M206.5 247v5" stroke="#fff" stroke-width="1"/>
<path d="M292 260.5h5M294.5 258v5" stroke="#fff" stroke-width="1"/>
<path d="M278 272.5h5M280.5 270v5" stroke="#fff" stroke-width="1"/>
<path d="M315 284.5h5M317.5 282v5" stroke="#fff" stroke-width="1"/>
<path d="M351 296.5h5M353.5 294v5" stroke="#fff" stroke-width="1"/>
<path d="M374 303.5h5M376.5 301v5" stroke="#fff" stroke-width="1"/>
<path d="M369 305.5h5M371.5 303v5" stroke="#fff" stroke-width="1"/>
<path d="M331 319.5h5M333.5 317v5" stroke="#fff" stroke-width="1"/>
<path d="M329 324.5h5M331.5 322v5" stroke="#fff" stroke-width="1"/>
<path d="M338 334.5h5M340.5 332v5" stroke="#fff" stroke-width="1"/>
<path d="M365 359.5h5M367.5 357v5" stroke="#fff" stroke-width="1"/>
<path d="M348 373.5h5M350.5 371v5" stroke="#fff" stroke-width="1"/>
<path d="M328 394.5h5M330.5 392v5" stroke="#fff" stroke-width="1"/>
<path d="M297 422.5h5M299.5 420v5" stroke="#fff" stroke-width="1"/>
<path d="M291 427.5h5M293.5 425v5" stroke="#fff" stroke-width="1"/>
<path d="M274 443.5h5M276.5 441v5" stroke="#fff" stroke-width="1"/>
<path d="M267 448.5h5M269.5 446v5" stroke="#fff" stroke-width="1"/>
<path d="M271 466.5h5M273.5 464v5" stroke="#fff" stroke-width="1"/>
<path d="M271 485.5h5M273.5 483v5" stroke="#fff" stroke-width="1"/>
<path d="M273 493.5h5M275.5 491v5" stroke="#fff" stroke-width="1"/>
<path d="M229 498.5h5M231.5 496v5" stroke="#fff" stroke-width="1"/>
<path d="M273 507.5h5M275.5 505v5" stroke="#fff" stroke-width="1"/>
<path d="M267 510.5h5M269.5 508v5" stroke="#fff" stroke-width="1"/>
<path d="M251 517.5h5M253.5 515v5" stroke="#fff" stroke-width="1"/>
<path d="M245 522.5h5M247.5 520v5" stroke="#fff" stroke-width="1"/>
<path d="M229 529.5h5M231.5 527v5" stroke="#fff" stroke-width="1"/>
<path d="M211 554.5h5M213.5 552v5" stroke="#fff" stroke-width="1"/>
<path d="M207 559.5h5M209.5 557v5" stroke="#fff" stroke-width="1"/>
<path d="M203 568.5h5M205.5 566v5" stroke="#fff" stroke-width="1"/>
<path d="M201 573.5h5M203.5 571v5" stroke="#fff" stroke-width="1"/>
<path d="M196 578.5h5M198.5 576v5" stroke="#fff" stroke-width="1"/>
<path d="M196 583.5h5M198.5 581v5" stroke="#fff" stroke-width="1"/>
<path d="M149 586.5h5M151.5 584v5" stroke="#fff" stroke-width="1"/>
<path d="M139 586.5h5M141.5 584v5" stroke="#fff" stroke-width="1"/>
<path d="M138 601.5h5M140.5 599v5" stroke="#fff" stroke-width="1"/>
<path d="M139 613.5h5M141.5 611v5" stroke="#fff" stroke-width="1"/>
<path d="M140 621.5h5M142.5 619v5" stroke="#fff" stroke-width="1"/>
<path d="M140 638.5h5M142.5 636v5" stroke="#fff" stroke-width="1"/>
<path d="M136 642.5h5M138.5 640v5" stroke="#fff" stroke-width="1"/>
<path d="M129 652.5h5M131.5 650v5" stroke="#fff" stroke-width="1"/>
<path d="M130 658.5h5M132.5 656v5" stroke="#fff" stroke-width="1"/>
<path d="M130 664.5h5M132.5 662v5" stroke="#fff" stroke-width="1"/>
<path d="M119 669.5h5M121.5 667v5" stroke="#fff" stroke-width="1"/>
<path d="M119 673.5h5M121.5 671v5" stroke="#fff" stroke-width="1"/>
<path d="M150 681.5h5M152.5 679v5" stroke="#fff" stroke-width="1"/>
<path d="M142 692.5h5M144.5 690v5" stroke="#fff" stroke-width="1"/>
<path d="M128 695.5h5M130.5 693v5" stroke="#fff" stroke-width="1"/>
<path d="M142 704.5h5M144.5 702v5" stroke="#fff" stroke-width="1"/>
<path d="M165 708.5h5M167.5 706v5" stroke="#fff" stroke-width="1"/>
<path d="M190 718.5h5M192.5 716v5" stroke="#fff" stroke-width="1"/>
<path d="M202 723.5h5M204.5 721v5" stroke="#fff" stroke-width="1"/>
<path d="M162 727.5h5M164.5 725v5" stroke="#fff" stroke-width="1"/>
<path d="M145 731.5h5M147.5 729v5" stroke="#fff" stroke-width="1"/>
<path d="M240 501.5h5M242.5 499v5" stroke="#fff" stroke-width="1"/>
<path d="M251 503.5h5M253.5 501v5" stroke="#fff" stroke-width="1"/>
<path d="M147 586.5h5M149.5 584v5" stroke="#fff" stroke-width="1"/>
<path d="M173 50.5h5M175.5 48v5" stroke="#fff" stroke-width="1"/>
<path d="M125 67.5h5M127.5 65v5" stroke="#fff" stroke-width="1"/>
<path d="M95 80.5h5M97.5 78v5" stroke="#fff" stroke-width="1"/>
<path d="M83 88.5h5M85.5 86v5" stroke="#fff" stroke-width="1"/>
<path d="M155 104.5h5M157.5 102v5" stroke="#fff" stroke-width="1"/>
<path d="M155 111.5h5M157.5 109v5" stroke="#fff" stroke-width="1"/>
<path d="M161 122.5h5M163.5 120v5" stroke="#fff" stroke-width="1"/>
<path d="M233 171.5h5M235.5 169v5" stroke="#fff" stroke-width="1"/>
<path d="M216 180.5h5M218.5 178v5" stroke="#fff" stroke-width="1"/>
<path d="M179 197.5h5M181.5 195v5" stroke="#fff" stroke-width="1"/>
<path d="M161 205.5h5M163.5 203v5" stroke="#fff" stroke-width="1"/>
<path d="M155 207.5h5M157.5 205v5" stroke="#fff" stroke-width="1"/>
<path d="M221 218.5h5M223.5 216v5" stroke="#fff" stroke-width="1"/>
<path d="M233 223.5h5M235.5 221v5" stroke="#fff" stroke-width="1"/>
<path d="M209 246.5h5M211.5 244v5" stroke="#fff" stroke-width="1"/>
<path d="M209 248.5h5M211.5 246v5" stroke="#fff" stroke-width="1"/>
<path d="M317 260.5h5M319.5 258v5" stroke="#fff" stroke-width="1"/>
<path d="M293 272.5h5M295.5 270v5" stroke="#fff" stroke-width="1"/>
<path d="M323 284.5h5M325.5 282v5" stroke="#fff" stroke-width="1"/>
<path d="M352 296.5h5M354.5 294v5" stroke="#fff" stroke-width="1"/>
<path d="M369 304.5h5M371.5 302v5" stroke="#fff" stroke-width="1"/>
<path d="M317 319.5h5M319.5 317v5" stroke="#fff" stroke-width="1"/>
<path d="M323 324.5h5M325.5 322v5" stroke="#fff" stroke-width="1"/>
<path d="M329 334.5h5M331.5 332v5" stroke="#fff" stroke-width="1"/>
<path d="M352 359.5h5M354.5 357v5" stroke="#fff" stroke-width="1"/>
<path d="M341 373.5h5M343.5 371v5" stroke="#fff" stroke-width="1"/>
<path d="M328 394.5h5M330.5 392v5" stroke="#fff" stroke-width="1"/>
<path d="M305 422.5h5M307.5 420v5" stroke="#fff" stroke-width="1"/>
<path d="M299 427.5h5M301.5 425v5" stroke="#fff" stroke-width="1"/>
<path d="M287 443.5h5M289.5 441v5" stroke="#fff" stroke-width="1"/>
<path d="M281 449.5h5M283.5 447v5" stroke="#fff" stroke-width="1"/>
<path d="M293 466.5h5M295.5 464v5" stroke="#fff" stroke-width="1"/>
<path d="M299 485.5h5M301.5 483v5" stroke="#fff" stroke-width="1"/>
<path d="M305 493.5h5M307.5 491v5" stroke="#fff" stroke-width="1"/>
<path d="M256 498.5h5M258.5 496v5" stroke="#fff" stroke-width="1"/>
<path d="M305 507.5h5M307.5 505v5" stroke="#fff" stroke-width="1"/>
<path d="M299 509.5h5M301.5 507v5" stroke="#fff" stroke-width="1"/>
<path d="M280 517.5h5M282.5 515v5" stroke="#fff" stroke-width="1"/>
<path d="M275 522.5h5M277.5 520v5" stroke="#fff" stroke-width="1"/>
<path d="M257 529.5h5M259.5 527v5" stroke="#fff" stroke-width="1"/>
<path d="M227 554.5h5M229.5 552v5" stroke="#fff" stroke-width="1"/>
<path d="M221 559.5h5M223.5 557v5" stroke="#fff" stroke-width="1"/>
<path d="M215 568.5h5M217.5 566v5" stroke="#fff" stroke-width="1"/>
<path d="M209 571.5h5M211.5 569v5" stroke="#fff" stroke-width="1"/>
<path d="M209 573.5h5M211.5 571v5" stroke="#fff" stroke-width="1"/>
<path d="M202 578.5h5M204.5 576v5" stroke="#fff" stroke-width="1"/>
<path d="M197 582.5h5M199.5 580v5" stroke="#fff" stroke-width="1"/>
<path d="M191 583.5h5M193.5 581v5" stroke="#fff" stroke-width="1"/>
<path d="M173 586.5h5M175.5 584v5" stroke="#fff" stroke-width="1"/>
<path d="M179 601.5h5M181.5 599v5" stroke="#fff" stroke-width="1"/>
<path d="M185 613.5h5M187.5 611v5" stroke="#fff" stroke-width="1"/>
<path d="M191 621.5h5M193.5 619v5" stroke="#fff" stroke-width="1"/>
<path d="M197 638.5h5M199.5 636v5" stroke="#fff" stroke-width="1"/>
<path d="M191 640.5h5M193.5 638v5" stroke="#fff" stroke-width="1"/>
<path d="M185 642.5h5M187.5 640v5" stroke="#fff" stroke-width="1"/>
<path d="M161 652.5h5M163.5 650v5" stroke="#fff" stroke-width="1"/>
<path d="M149 658.5h5M151.5 656v5" stroke="#fff" stroke-width="1"/>
<path d="M131 664.5h5M133.5 662v5" stroke="#fff" stroke-width="1"/>
<path d="M118 666.5h5M120.5 664v5" stroke="#fff" stroke-width="1"/>
<path d="M107 669.5h5M109.5 667v5" stroke="#fff" stroke-width="1"/>
<path d="M95 671.5h5M97.5 669v5" stroke="#fff" stroke-width="1"/>
<path d="M60 680.5h5M62.5 678v5" stroke="#fff" stroke-width="1"/>
<path d="M135 691.5h5M137.5 689v5" stroke="#fff" stroke-width="1"/>
<path d="M83 695.5h5M85.5 693v5" stroke="#fff" stroke-width="1"/>
<path d="M165 717.5h5M167.5 715v5" stroke="#fff" stroke-width="1"/>
<path d="M186 722.5h5M188.5 720v5" stroke="#fff" stroke-width="1"/>
<path d="M71 732.5h5M73.5 730v5" stroke="#fff" stroke-width="1"/>
<path d="M60 732.5h5M62.5 730v5" stroke="#fff" stroke-width="1"/>
<path d="M269 501.5h5M271.5 499v5" stroke="#fff" stroke-width="1"/>
<path d="M281 503.5h5M283.5 501v5" stroke="#fff" stroke-width="1"/>
<path d="M101 669.5h5M103.5 667v5" stroke="#fff" stroke-width="1"/>
<path d="M64 731.5h5M66.5 729v5" stroke="#fff" stroke-width="1"/>
<path d="M71 732.5h5M73.5 730v5" stroke="#fff" stroke-width="1"/>
<path d="M77 731.5h5M79.5 729v5" stroke="#fff" stroke-width="1"/>
<path d="M83 731.5h5M85.5 729v5" stroke="#fff" stroke-width="1"/>
<path d="M394 284.5h5M396.5 282v5" stroke="#fff" stroke-width="1"/>
<path d="M385 295.5h5M387.5 293v5" stroke="#fff" stroke-width="1"/>
<path d="M372 304.5h5M374.5 302v5" stroke="#fff" stroke-width="1"/>
<path d="M367 307.5h5M369.5 305v5" stroke="#fff" stroke-width="1"/>
<path d="M364 319.5h5M366.5 317v5" stroke="#fff" stroke-width="1"/>
<path d="M364 324.5h5M366.5 322v5" stroke="#fff" stroke-width="1"/>
<path d="M358 334.5h5M360.5 332v5" stroke="#fff" stroke-width="1"/>
<path d="M352 359.5h5M354.5 357v5" stroke="#fff" stroke-width="1"/>
<path d="M348 373.5h5M350.5 371v5" stroke="#fff" stroke-width="1"/>
<path d="M346 394.5h5M348.5 392v5" stroke="#fff" stroke-width="1"/>
<path d="M343 422.5h5M345.5 420v5" stroke="#fff" stroke-width="1"/>
<path d="M351 427.5h5M353.5 425v5" stroke="#fff" stroke-width="1"/>
<path d="M346 443.5h5M348.5 441v5" stroke="#fff" stroke-width="1"/>
<path d="M336 448.5h5M338.5 446v5" stroke="#fff" stroke-width="1"/>
<path d="M328 466.5h5M330.5 464v5" stroke="#fff" stroke-width="1"/>
<path d="M349 485.5h5M351.5 483v5" stroke="#fff" stroke-width="1"/>
<path d="M331 493.5h5M333.5 491v5" stroke="#fff" stroke-width="1"/>
<path d="M318 498.5h5M320.5 496v5" stroke="#fff" stroke-width="1"/>
<path d="M312 501.5h5M314.5 499v5" stroke="#fff" stroke-width="1"/>
<path d="M320 502.5h5M322.5 500v5" stroke="#fff" stroke-width="1"/>
<path d="M326 507.5h5M328.5 505v5" stroke="#fff" stroke-width="1"/>
<path d="M334 510.5h5M336.5 508v5" stroke="#fff" stroke-width="1"/>
<path d="M389 517.5h5M391.5 515v5" stroke="#fff" stroke-width="1"/>
<path d="M342 522.5h5M344.5 520v5" stroke="#fff" stroke-width="1"/>
<path d="M309 529.5h5M311.5 527v5" stroke="#fff" stroke-width="1"/>
<path d="M333 554.5h5M335.5 552v5" stroke="#fff" stroke-width="1"/>
<path d="M178 559.5h5M180.5 557v5" stroke="#fff" stroke-width="1"/>
<path d="M411 567.5h5M413.5 565v5" stroke="#fff" stroke-width="1"/>
<path d="M398 568.5h5M400.5 566v5" stroke="#fff" stroke-width="1"/>
<path d="M344 571.5h5M346.5 569v5" stroke="#fff" stroke-width="1"/>
<path d="M181 573.5h5M183.5 571v5" stroke="#fff" stroke-width="1"/>
<path d="M154 577.5h5M156.5 575v5" stroke="#fff" stroke-width="1"/>
<path d="M381 579.5h5M383.5 577v5" stroke="#fff" stroke-width="1"/>
<path d="M404 582.5h5M406.5 580v5" stroke="#fff" stroke-width="1"/>
<path d="M407 586.5h5M409.5 584v5" stroke="#fff" stroke-width="1"/>
<path d="M422 601.5h5M424.5 599v5" stroke="#fff" stroke-width="1"/>
<path d="M420 613.5h5M422.5 611v5" stroke="#fff" stroke-width="1"/>
<path d="M346 622.5h5M348.5 620v5" stroke="#fff" stroke-width="1"/>
<path d="M385 638.5h5M387.5 636v5" stroke="#fff" stroke-width="1"/>
<path d="M393 643.5h5M395.5 641v5" stroke="#fff" stroke-width="1"/>
<path d="M366 652.5h5M368.5 650v5" stroke="#fff" stroke-width="1"/>
<path d="M389 658.5h5M391.5 656v5" stroke="#fff" stroke-width="1"/>
<path d="M328 665.5h5M330.5 663v5" stroke="#fff" stroke-width="1"/>
<path d="M268 668.5h5M270.5 666v5" stroke="#fff" stroke-width="1"/>
<path d="M345 669.5h5M347.5 667v5" stroke="#fff" stroke-width="1"/>
<path d="M436 671.5h5M438.5 669v5" stroke="#fff" stroke-width="1"/>
<path d="M441 672.5h5M443.5 670v5" stroke="#fff" stroke-width="1"/>
<path d="M448 680.5h5M450.5 678v5" stroke="#fff" stroke-width="1"/>
<path d="M455 692.5h5M457.5 690v5" stroke="#fff" stroke-width="1"/>
<path d="M448 696.5h5M450.5 694v5" stroke="#fff" stroke-width="1"/>
<path d="M430 703.5h5M432.5 701v5" stroke="#fff" stroke-width="1"/>
<path d="M432 707.5h5M434.5 705v5" stroke="#fff" stroke-width="1"/>
<path d="M429 717.5h5M431.5 715v5" stroke="#fff" stroke-width="1"/>
<path d="M433 724.5h5M435.5 722v5" stroke="#fff" stroke-width="1"/>
<path d="M438 731.5h5M440.5 729v5" stroke="#fff" stroke-width="1"/>
<path d="M444 732.5h5M446.5 730v5" stroke="#fff" stroke-width="1"/>
<path d="M329 554.5h5M331.5 552v5" stroke="#fff" stroke-width="1"/>
<path d="M351 621.5h5M353.5 619v5" stroke="#fff" stroke-width="1"/>
<path d="M341 664.5h5M343.5 662v5" stroke="#fff" stroke-width="1"/>
<path d="M275 668.5h5M277.5 666v5" stroke="#fff" stroke-width="1"/>
<path d="M659 112.5h5M661.5 110v5" stroke="#fff" stroke-width="1"/>
<path d="M647 122.5h5M649.5 120v5" stroke="#fff" stroke-width="1"/>
<path d="M587 171.5h5M589.5 169v5" stroke="#fff" stroke-width="1"/>
<path d="M575 180.5h5M577.5 178v5" stroke="#fff" stroke-width="1"/>
<path d="M567 197.5h5M569.5 195v5" stroke="#fff" stroke-width="1"/>
<path d="M550 206.5h5M552.5 204v5" stroke="#fff" stroke-width="1"/>
<path d="M540 218.5h5M542.5 216v5" stroke="#fff" stroke-width="1"/>
<path d="M536 223.5h5M538.5 221v5" stroke="#fff" stroke-width="1"/>
<path d="M520 246.5h5M522.5 244v5" stroke="#fff" stroke-width="1"/>
<path d="M516 249.5h5M518.5 247v5" stroke="#fff" stroke-width="1"/>
<path d="M496 260.5h5M498.5 258v5" stroke="#fff" stroke-width="1"/>
<path d="M493 272.5h5M495.5 270v5" stroke="#fff" stroke-width="1"/>
<path d="M460 284.5h5M462.5 282v5" stroke="#fff" stroke-width="1"/>
<path d="M446 296.5h5M448.5 294v5" stroke="#fff" stroke-width="1"/>
<path d="M427 303.5h5M429.5 301v5" stroke="#fff" stroke-width="1"/>
<path d="M422 306.5h5M424.5 304v5" stroke="#fff" stroke-width="1"/>
<path d="M419 319.5h5M421.5 317v5" stroke="#fff" stroke-width="1"/>
<path d="M418 324.5h5M420.5 322v5" stroke="#fff" stroke-width="1"/>
<path d="M405 334.5h5M407.5 332v5" stroke="#fff" stroke-width="1"/>
<path d="M399 359.5h5M401.5 357v5" stroke="#fff" stroke-width="1"/>
<path d="M395 373.5h5M397.5 371v5" stroke="#fff" stroke-width="1"/>
<path d="M394 394.5h5M396.5 392v5" stroke="#fff" stroke-width="1"/>
<path d="M391 422.5h5M393.5 420v5" stroke="#fff" stroke-width="1"/>
<path d="M393 427.5h5M395.5 425v5" stroke="#fff" stroke-width="1"/>
<path d="M394 443.5h5M396.5 441v5" stroke="#fff" stroke-width="1"/>
<path d="M395 448.5h5M397.5 446v5" stroke="#fff" stroke-width="1"/>
<path d="M400 467.5h5M402.5 465v5" stroke="#fff" stroke-width="1"/>
<path d="M403 485.5h5M405.5 483v5" stroke="#fff" stroke-width="1"/>
<path d="M406 493.5h5M408.5 491v5" stroke="#fff" stroke-width="1"/>
<path d="M409 499.5h5M411.5 497v5" stroke="#fff" stroke-width="1"/>
<path d="M410 502.5h5M412.5 500v5" stroke="#fff" stroke-width="1"/>
<path d="M411 507.5h5M413.5 505v5" stroke="#fff" stroke-width="1"/>
<path d="M412 510.5h5M414.5 508v5" stroke="#fff" stroke-width="1"/>
<path d="M412 517.5h5M414.5 515v5" stroke="#fff" stroke-width="1"/>
<path d="M414 522.5h5M416.5 520v5" stroke="#fff" stroke-width="1"/>
<path d="M417 529.5h5M419.5 527v5" stroke="#fff" stroke-width="1"/>
<path d="M424 554.5h5M426.5 552v5" stroke="#fff" stroke-width="1"/>
<path d="M424 559.5h5M426.5 557v5" stroke="#fff" stroke-width="1"/>
<path d="M428 570.5h5M430.5 568v5" stroke="#fff" stroke-width="1"/>
<path d="M424 578.5h5M426.5 576v5" stroke="#fff" stroke-width="1"/>
<path d="M425 582.5h5M427.5 580v5" stroke="#fff" stroke-width="1"/>
<path d="M425 586.5h5M427.5 584v5" stroke="#fff" stroke-width="1"/>
<path d="M431 601.5h5M433.5 599v5" stroke="#fff" stroke-width="1"/>
<path d="M437 613.5h5M439.5 611v5" stroke="#fff" stroke-width="1"/>
<path d="M442 621.5h5M444.5 619v5" stroke="#fff" stroke-width="1"/>
<path d="M441 640.5h5M443.5 638v5" stroke="#fff" stroke-width="1"/>
<path d="M445 652.5h5M447.5 650v5" stroke="#fff" stroke-width="1"/>
<path d="M449 658.5h5M451.5 656v5" stroke="#fff" stroke-width="1"/>
<path d="M454 664.5h5M456.5 662v5" stroke="#fff" stroke-width="1"/>
<path d="M455 667.5h5M457.5 665v5" stroke="#fff" stroke-width="1"/>
<path d="M441 671.5h5M443.5 669v5" stroke="#fff" stroke-width="1"/>
<path d="M447 680.5h5M449.5 678v5" stroke="#fff" stroke-width="1"/>
<path d="M455 691.5h5M457.5 689v5" stroke="#fff" stroke-width="1"/>
<path d="M459 697.5h5M461.5 695v5" stroke="#fff" stroke-width="1"/>
<path d="M468 707.5h5M470.5 705v5" stroke="#fff" stroke-width="1"/>
<path d="M476 713.5h5M478.5 711v5" stroke="#fff" stroke-width="1"/>
<path d="M484 718.5h5M486.5 716v5" stroke="#fff" stroke-width="1"/>
<path d="M487 723.5h5M489.5 721v5" stroke="#fff" stroke-width="1"/>
<path d="M487 731.5h5M489.5 729v5" stroke="#fff" stroke-width="1"/>
<path d="M471 732.5h5M473.5 730v5" stroke="#fff" stroke-width="1"/>
<polyline points="62.2,672.3 143.1,680.5 67.0,693.0 102.0,695.4 96.0,704.6 102.1,716.4 108.3,722.5 126.7,726.6 157.5,727.6 195.0,730.7 288.9,732.4" fill="none" stroke="#c86400" stroke-width="0.99" />
<polyline points="61.5,677.0 61.5,682.0 82.0,692.2 65.0,695.5 62.5,701.5" fill="none" stroke="#ffff00" stroke-width="0.99" />
<polyline points="289.4,655.4 284.7,658.6 269.6,663.8 261.5,665.6 252.3,667.5 247.5,669.7 241.3,671.9 225.6,682.5 157.5,692.8 205.8,695.3 170.3,704.6 164.7,709.2 131.9,717.9 120.6,721.5 113.4,723.5 128.2,726.4 157.5,727.8 211.7,732.2" fill="none" stroke="#c8c800" stroke-width="0.99" />
<polyline points="118.1,50.7 144.2,67.2 155.1,80.6 140.1,88.1 108.1,104.5 102.2,111.5 95.9,122.6 172.3,171.0 172.3,180.5 173.5,197.5 174.6,205.0 173.5,207.3 208.7,218.6 210.0,223.6 205.9,246.3 206.6,249.3 294.7,260.9 280.6,272.5 317.3,284.3 353.7,296.3 376.4,303.5 371.8,305.8 333.2,319.4 331.4,324.4 340.5,334.2 367.3,359.2 350.3,373.5 330.5,394.3 299.9,422.2 293.5,427.2 276.5,443.5 269.8,448.6 273.2,466.9 273.5,485.5 275.7,493.5 231.1,498.9 275.7,507.4 269.8,510.7 253.0,517.5 247.1,522.5 231.5,529.2 213.3,554.5 209.9,559.6 205.7,568.0 203.2,573.9 198.1,578.9 198.1,583.1 151.8,586.5 141.2,586.8 140.5,601.7 141.7,613.5 142.6,621.9 142.6,638.7 138.3,642.9 131.4,652.3 132.5,658.2 132.2,664.8 121.6,669.7 121.6,673.3 152.4,681.3 144.2,692.8 130.3,695.4 144.7,704.1 167.7,708.2 192.3,718.4 204.3,723.5 164.8,727.8 147.2,731.7" fill="none" stroke="#ff0080" stroke-width="0.99" />
<polyline points="175.3,50.7 127.6,67.2 97.0,80.6 85.6,88.1 157.6,104.0 157.6,111.5 163.5,122.6 235.0,171.0 218.0,180.5 181.4,197.5 163.5,205.0 157.6,207.3 223.6,218.6 235.0,223.6 211.6,246.5 211.5,248.8 319.5,260.9 295.8,272.5 325.3,284.7 354.8,296.3 371.8,304.7 319.6,319.4 325.3,324.0 331.4,334.2 354.8,359.2 343.0,373.5 330.5,394.3 307.6,422.2 301.5,427.2 289.4,443.5 283.5,449.0 295.1,466.9 301.3,485.5 307.7,493.5 258.9,498.9 307.7,507.4 301.8,509.9 282.5,517.5 277.4,522.5 259.2,529.2 229.3,554.5 223.0,559.4 217.5,568.0 211.6,571.4 211.6,573.9 204.0,578.1 199.8,582.6 193.9,583.1 175.4,586.8 181.3,601.7 187.7,613.5 193.4,621.9 199.8,638.7 193.4,640.9 187.2,642.9 163.0,652.3 151.7,658.3 133.7,664.6 120.6,666.7 109.8,669.2 97.5,671.8 62.2,680.0 137.0,691.3 85.0,695.4 167.7,717.4 188.2,722.7 73.0,732.0 62.0,732.3" fill="none" stroke="#00ff00" stroke-width="0.99" />
<polyline points="396.3,284.3 387.7,295.6 374.1,304.0 369.6,307.0 366.6,319.4 366.6,324.4 360.0,334.2 354.8,359.2 350.3,373.5 348.4,394.3 345.7,422.2 353.7,427.2 348.4,443.6 338.0,448.6 330.4,466.9 351.5,485.1 333.8,493.5 320.3,498.9 314.4,501.5 322.9,502.6 328.8,507.4 336.3,510.4 391.9,517.5 344.4,522.5 311.1,529.2 335.5,554.5 180.4,559.6 413.8,567.5 400.3,568.8 346.4,571.3 183.8,573.5 156.0,577.6 383.5,579.4 406.2,582.3 409.6,586.5 424.3,601.6 422.3,613.6 348.2,622.8 387.8,638.6 395.8,643.2 368.7,652.2 391.4,658.6 330.7,665.4 270.6,668.3 347.5,669.0 438.3,671.9 443.9,672.2 450.1,680.6 457.3,692.4 450.1,696.0 432.2,703.5 434.9,707.5 431.9,717.0 435.8,724.1 440.3,731.3 446.9,732.2" fill="none" stroke="#00ffff" stroke-width="0.99" />
<polyline points="661.0,112.0 649.4,122.6 589.2,171.4 577.4,180.5 569.5,197.5 552.9,206.1 542.2,218.6 538.4,223.6 522.5,246.3 518.4,249.3 498.9,260.4 495.1,272.9 462.2,284.3 448.3,296.3 429.7,303.1 424.7,306.5 421.1,319.4 420.6,324.4 407.7,334.2 401.3,359.2 397.2,373.5 396.3,394.3 393.4,422.2 395.6,427.2 396.3,443.6 397.5,448.8 402.5,467.0 405.4,485.5 408.8,493.4 411.0,499.0 412.1,502.0 413.5,507.4 414.1,510.7 414.2,517.5 416.0,522.0 419.0,529.4 426.0,554.5 426.4,559.2 430.3,570.4 426.0,578.9 427.3,582.6 427.6,586.8 433.2,601.5 439.5,613.5 444.0,621.5 443.0,640.9 447.2,652.8 451.9,658.2 456.4,664.1 457.3,667.7 443.9,671.3 449.2,680.6 457.3,691.9 461.8,697.3 470.7,707.1 478.8,713.4 486.8,718.7 489.5,723.2 489.0,731.8 473.4,732.2" fill="none" stroke="#ff0000" stroke-width="0.99" />
<polyline points="412.4,50.7 403.8,74.5 394.7,105.1 388.6,122.2 382.2,147.1 376.6,172.1 372.0,194.8 367.5,219.8 364.6,240.0 362.9,259.5 360.5,285.4 360.0,319.4 361.5,345.0 363.9,371.6 368.4,398.9 374.1,428.4 377.6,440.0 386.0,473.7 395.3,498.9 405.4,529.2 414.6,557.9 422.2,586.5 431.3,610.4 436.7,630.7 443.9,665.6 447.4,683.8 451.0,701.7 454.6,718.7 473.4,732.2" fill="none" stroke="#ff00ff" stroke-width="0.99" />
<polyline points="454.6,718.7 446.9,731.8" fill="none" stroke="#ff00ff" stroke-width="0.99" />
<polyline points="433.3,50.7 427.2,72.2 420.8,90.4 414.5,110.8 409.5,129.0 404.5,149.4 400.4,167.6 396.3,188.0 392.4,208.4 390.2,226.6 388.4,244.7 386.6,267.2 385.4,285.4 386.1,319.4 387.7,342.1 391.1,367.1 395.2,394.3 400.2,421.6 404.7,444.3 410.4,460.2 417.2,485.5 422.2,504.0 427.3,524.2 431.5,539.3 437.0,555.0 442.1,580.0 446.9,597.9 453.7,630.7 460.0,667.7 463.9,691.9 464.4,699.0 470.7,706.6 478.8,712.0 486.0,716.0 491.3,720.5 500.3,725.9 510.1,732.2" fill="none" stroke="#ffc0ff" stroke-width="0.99" />
<polyline points="464.4,699.0 454.6,718.7" fill="none" stroke="#ffc0ff" stroke-width="0.99" />
</g>
<rect x="286" y="652" width="7" height="7" fill="#c8c800"/>
<text x="289.5" y="658" font-size="7" font-family="Liberation Sans,sans-serif" text-anchor="middle" fill="#000">3</text>
<rect x="223" y="679" width="7" height="7" fill="#c8c800"/>
<text x="226.5" y="685" font-size="7" font-family="Liberation Sans,sans-serif" text-anchor="middle" fill="#000">2</text>
<rect x="162" y="706" width="7" height="7" fill="#c8c800"/>
<text x="165.5" y="712" font-size="7" font-family="Liberation Sans,sans-serif" text-anchor="middle" fill="#000">1</text>
<line x1="61.5" y1="652.5" x2="64.5" y2="652.5" stroke="#fff" stroke-width="1"/>
<line x1="61.5" y1="658.5" x2="64.5" y2="658.5" stroke="#fff" stroke-width="1"/>
<line x1="61.5" y1="664.5" x2="64.5" y2="664.5" stroke="#fff" stroke-width="1"/>
<line x1="61.5" y1="669.5" x2="64.5" y2="669.5" stroke="#fff" stroke-width="1"/>
<line x1="61.5" y1="703.5" x2="64.5" y2="703.5" stroke="#fff" stroke-width="1"/>
<line x1="61.5" y1="707.5" x2="64.5" y2="707.5" stroke="#fff" stroke-width="1"/>
<line x1="61.5" y1="721.5" x2="64.5" y2="721.5" stroke="#fff" stroke-width="1"/>
<line x1="61.5" y1="724.5" x2="64.5" y2="724.5" stroke="#fff" stroke-width="1"/>
<rect x="67.5" y="607.5" width="43" height="17" fill="#000" stroke="#ffff00"/>
<rect x="67.5" y="636.5" width="57" height="17" fill="#000" stroke="#c86400"/>
<rect x="625.5" y="709.5" width="30" height="17" fill="#000" stroke="#ff00ff"/>
<line x1="761.5" y1="39.5" x2="761.5" y2="769.5" stroke="#00ff00" stroke-width="1"/>
<line x1="826.5" y1="39.5" x2="826.5" y2="769.5" stroke="#ff0080" stroke-width="1"/>
<line x1="761.5" y1="67.5" x2="734.5" y2="55.5" stroke="#fff" stroke-width="0.99"/>
<line x1="761.5" y1="80.5" x2="732.5" y2="80.5" stroke="#fff" stroke-width="1"/>
<line x1="761.5" y1="88.5" x2="736.5" y2="74.5" stroke="#fff" stroke-width="0.99"/>
<line x1="761.5" y1="104.5" x2="744.5" y2="79.5" stroke="#fff" stroke-width="0.99"/>
<line x1="761.5" y1="111.5" x2="745.5" y2="82.5" stroke="#fff" stroke-width="0.99"/>
<line x1="761.5" y1="122.5" x2="748.5" y2="96.5" stroke="#fff" stroke-width="0.99"/>
<line x1="761.5" y1="171.5" x2="743.5" y2="149.5" stroke="#fff" stroke-width="0.99"/>
<line x1="761.5" y1="180.5" x2="739.5" y2="162.5" stroke="#fff" stroke-width="0.99"/>
<line x1="761.5" y1="197.5" x2="734.5" y2="186.5" stroke="#fff" stroke-width="0.99"/>
<line x1="761.5" y1="205.5" x2="733.5" y2="198.5" stroke="#fff" stroke-width="0.99"/>
<line x1="761.5" y1="207.5" x2="732.5" y2="202.5" stroke="#fff" stroke-width="0.99"/>
<line x1="761.5" y1="218.5" x2="734.5" y2="208.5" stroke="#fff" stroke-width="0.99"/>
<line x1="761.5" y1="223.5" x2="735.5" y2="211.5" stroke="#fff" stroke-width="0.99"/>
<line x1="761.5" y1="246.5" x2="733.5" y2="238.5" stroke="#fff" stroke-width="0.99"/>
<line x1="761.5" y1="249.5" x2="733.5" y2="241.5" stroke="#fff" stroke-width="0.99"/>
<line x1="761.5" y1="260.5" x2="734.5" y2="250.5" stroke="#fff" stroke-width="0.99"/>
<line x1="761.5" y1="272.5" x2="733.5" y2="264.5" stroke="#fff" stroke-width="0.99"/>
<line x1="761.5" y1="284.5" x2="732.5" y2="279.5" stroke="#fff" stroke-width="0.99"/>
<line x1="761.5" y1="296.5" x2="732.5" y2="294.5" stroke="#fff" stroke-width="0.99"/>
<line x1="761.5" y1="303.5" x2="732.5" y2="303.5" stroke="#fff" stroke-width="1"/>
<line x1="761.5" y1="305.5" x2="732.5" y2="305.5" stroke="#fff" stroke-width="1"/>
<line x1="761.5" y1="307.5" x2="732.5" y2="307.5" stroke="#fff" stroke-width="1"/>
<line x1="761.5" y1="319.5" x2="732.5" y2="321.5" stroke="#fff" stroke-width="0.99"/>
<line x1="761.5" y1="322.5" x2="732.5" y2="322.5" stroke="#fff" stroke-width="1"/>
<line x1="761.5" y1="324.5" x2="732.5" y2="324.5" stroke="#fff" stroke-width="1"/>
<line x1="761.5" y1="334.5" x2="732.5" y2="335.5" stroke="#fff" stroke-width="0.99"/>
<line x1="761.5" y1="359.5" x2="732.5" y2="362.5" stroke="#fff" stroke-width="0.99"/>
<line x1="761.5" y1="373.5" x2="732.5" y2="374.5" stroke="#fff" stroke-width="0.99"/>
<line x1="761.5" y1="394.5" x2="732.5" y2="391.5" stroke="#fff" stroke-width="0.99"/>
<line x1="761.5" y1="422.5" x2="732.5" y2="417.5" stroke="#fff" stroke-width="0.99"/>
<line x1="761.5" y1="427.5" x2="733.5" y2="421.5" stroke="#fff" stroke-width="0.99"/>
<line x1="761.5" y1="443.5" x2="733.5" y2="436.5" stroke="#fff" stroke-width="0.99"/>
<line x1="761.5" y1="449.5" x2="733.5" y2="441.5" stroke="#fff" stroke-width="0.99"/>
<line x1="761.5" y1="467.5" x2="734.5" y2="457.5" stroke="#fff" stroke-width="0.99"/>
<line x1="761.5" y1="485.5" x2="734.5" y2="473.5" stroke="#fff" stroke-width="0.99"/>
<line x1="761.5" y1="493.5" x2="734.5" y2="480.5" stroke="#fff" stroke-width="0.99"/>
<line x1="761.5" y1="498.5" x2="734.5" y2="485.5" stroke="#fff" stroke-width="0.99"/>
<line x1="761.5" y1="501.5" x2="734.5" y2="488.5" stroke="#fff" stroke-width="0.99"/>
<line x1="761.5" y1="503.5" x2="734.5" y2="489.5" stroke="#fff" stroke-width="0.99"/>
<line x1="761.5" y1="506.5" x2="734.5" y2="494.5" stroke="#fff" stroke-width="0.99"/>
<line x1="761.5" y1="510.5" x2="734.5" y2="498.5" stroke="#fff" stroke-width="0.99"/>
<line x1="761.5" y1="517.5" x2="734.5" y2="504.5" stroke="#fff" stroke-width="0.99"/>
<line x1="761.5" y1="522.5" x2="734.5" y2="509.5" stroke="#fff" stroke-width="0.99"/>
<line x1="761.5" y1="529.5" x2="734.5" y2="516.5" stroke="#fff" stroke-width="0.99"/>
<line x1="761.5" y1="554.5" x2="734.5" y2="544.5" stroke="#fff" stroke-width="0.99"/>
<line x1="761.5" y1="559.5" x2="734.5" y2="549.5" stroke="#fff" stroke-width="0.99"/>
<line x1="761.5" y1="567.5" x2="733.5" y2="558.5" stroke="#fff" stroke-width="0.99"/>
<line x1="761.5" y1="570.5" x2="733.5" y2="561.5" stroke="#fff" stroke-width="0.99"/>
<line x1="761.5" y1="573.5" x2="733.5" y2="564.5" stroke="#fff" stroke-width="0.99"/>
<line x1="761.5" y1="576.5" x2="733.5" y2="567.5" stroke="#fff" stroke-width="0.99"/>
<line x1="761.5" y1="579.5" x2="733.5" y2="570.5" stroke="#fff" stroke-width="0.99"/>
<line x1="761.5" y1="583.5" x2="733.5" y2="573.5" stroke="#fff" stroke-width="0.99"/>
<line x1="761.5" y1="587.5" x2="739.5" y2="573.5" stroke="#fff" stroke-width="0.99"/>
<line x1="761.5" y1="600.5" x2="740.5" y2="582.5" stroke="#fff" stroke-width="0.99"/>
<line x1="761.5" y1="613.5" x2="741.5" y2="593.5" stroke="#fff" stroke-width="0.99"/>
<line x1="761.5" y1="621.5" x2="742.5" y2="600.5" stroke="#fff" stroke-width="0.99"/>
<line x1="761.5" y1="639.5" x2="743.5" y2="616.5" stroke="#fff" stroke-width="0.99"/>
<line x1="761.5" y1="641.5" x2="742.5" y2="619.5" stroke="#fff" stroke-width="0.99"/>
<line x1="761.5" y1="643.5" x2="742.5" y2="622.5" stroke="#fff" stroke-width="0.99"/>
<line x1="761.5" y1="651.5" x2="740.5" y2="633.5" stroke="#fff" stroke-width="0.99"/>
<line x1="761.5" y1="658.5" x2="738.5" y2="641.5" stroke="#fff" stroke-width="0.99"/>
<line x1="761.5" y1="664.5" x2="737.5" y2="647.5" stroke="#fff" stroke-width="0.99"/>
<line x1="761.5" y1="667.5" x2="739.5" y2="646.5" stroke="#fff" stroke-width="0.99"/>
<line x1="761.5" y1="670.5" x2="743.5" y2="646.5" stroke="#fff" stroke-width="0.99"/>
<line x1="761.5" y1="672.5" x2="746.5" y2="646.5" stroke="#fff" stroke-width="0.99"/>
<line x1="761.5" y1="682.5" x2="748.5" y2="706.5" stroke="#fff" stroke-width="0.99"/>
<line x1="761.5" y1="682.5" x2="769.5" y2="666.5" stroke="#fff" stroke-width="0.99"/>
<line x1="761.5" y1="688.5" x2="782.5" y2="673.5" stroke="#fff" stroke-width="0.99"/>
<line x1="761.5" y1="689.5" x2="782.5" y2="674.5" stroke="#fff" stroke-width="0.99"/>
<line x1="761.5" y1="686.5" x2="774.5" y2="708.5" stroke="#fff" stroke-width="0.99"/>
<line x1="761.5" y1="693.5" x2="785.5" y2="688.5" stroke="#fff" stroke-width="0.99"/>
<line x1="761.5" y1="702.5" x2="789.5" y2="699.5" stroke="#fff" stroke-width="0.99"/>
<line x1="761.5" y1="718.5" x2="789.5" y2="710.5" stroke="#fff" stroke-width="0.99"/>
<line x1="761.5" y1="724.5" x2="789.5" y2="713.5" stroke="#fff" stroke-width="0.99"/>
<line x1="761.5" y1="728.5" x2="789.5" y2="715.5" stroke="#fff" stroke-width="0.99"/>
<line x1="761.5" y1="732.5" x2="789.5" y2="716.5" stroke="#fff" stroke-width="0.99"/>
<line x1="826.5" y1="67.5" x2="808.5" y2="89.5" stroke="#fff" stroke-width="0.99"/>
<line x1="826.5" y1="80.5" x2="819.5" y2="107.5" stroke="#fff" stroke-width="0.99"/>
<line x1="826.5" y1="88.5" x2="822.5" y2="117.5" stroke="#fff" stroke-width="0.99"/>
<line x1="826.5" y1="104.5" x2="798.5" y2="112.5" stroke="#fff" stroke-width="0.99"/>
<line x1="826.5" y1="111.5" x2="797.5" y2="117.5" stroke="#fff" stroke-width="0.99"/>
<line x1="826.5" y1="122.5" x2="797.5" y2="120.5" stroke="#fff" stroke-width="0.99"/>
<line x1="826.5" y1="171.5" x2="798.5" y2="159.5" stroke="#fff" stroke-width="0.99"/>
<line x1="826.5" y1="180.5" x2="797.5" y2="177.5" stroke="#fff" stroke-width="0.99"/>
<line x1="826.5" y1="197.5" x2="800.5" y2="209.5" stroke="#fff" stroke-width="0.99"/>
<line x1="826.5" y1="205.5" x2="802.5" y2="222.5" stroke="#fff" stroke-width="0.99"/>
<line x1="826.5" y1="207.5" x2="808.5" y2="223.5" stroke="#fff" stroke-width="0.99"/>
<line x1="826.5" y1="218.5" x2="797.5" y2="226.5" stroke="#fff" stroke-width="0.99"/>
<line x1="826.5" y1="223.5" x2="797.5" y2="226.5" stroke="#fff" stroke-width="0.99"/>
<line x1="826.5" y1="246.5" x2="799.5" y2="256.5" stroke="#fff" stroke-width="0.99"/>
<line x1="826.5" y1="249.5" x2="799.5" y2="259.5" stroke="#fff" stroke-width="0.99"/>
<line x1="826.5" y1="260.5" x2="797.5" y2="260.5" stroke="#fff" stroke-width="1"/>
<line x1="826.5" y1="272.5" x2="797.5" y2="276.5" stroke="#fff" stroke-width="0.99"/>
<line x1="826.5" y1="284.5" x2="798.5" y2="290.5" stroke="#fff" stroke-width="0.99"/>
<line x1="826.5" y1="296.5" x2="798.5" y2="303.5" stroke="#fff" stroke-width="0.99"/>
<line x1="826.5" y1="303.5" x2="798.5" y2="312.5" stroke="#fff" stroke-width="0.99"/>
<line x1="826.5" y1="305.5" x2="798.5" y2="314.5" stroke="#fff" stroke-width="0.99"/>
<line x1="826.5" y1="307.5" x2="798.5" y2="316.5" stroke="#fff" stroke-width="0.99"/>
<line x1="826.5" y1="319.5" x2="799.5" y2="331.5" stroke="#fff" stroke-width="0.99"/>
<line x1="826.5" y1="322.5" x2="799.5" y2="332.5" stroke="#fff" stroke-width="0.99"/>
<line x1="826.5" y1="324.5" x2="799.5" y2="334.5" stroke="#fff" stroke-width="0.99"/>
<line x1="826.5" y1="334.5" x2="799.5" y2="345.5" stroke="#fff" stroke-width="0.99"/>
<line x1="826.5" y1="359.5" x2="799.5" y2="370.5" stroke="#fff" stroke-width="0.99"/>
<line x1="826.5" y1="373.5" x2="799.5" y2="383.5" stroke="#fff" stroke-width="0.99"/>
<line x1="826.5" y1="394.5" x2="798.5" y2="401.5" stroke="#fff" stroke-width="0.99"/>
<line x1="826.5" y1="422.5" x2="798.5" y2="428.5" stroke="#fff" stroke-width="0.99"/>
<line x1="826.5" y1="427.5" x2="798.5" y2="433.5" stroke="#fff" stroke-width="0.99"/>
<line x1="826.5" y1="443.5" x2="797.5" y2="448.5" stroke="#fff" stroke-width="0.99"/>
<line x1="826.5" y1="449.5" x2="797.5" y2="454.5" stroke="#fff" stroke-width="0.99"/>
<line x1="826.5" y1="467.5" x2="797.5" y2="469.5" stroke="#fff" stroke-width="0.99"/>
<line x1="826.5" y1="485.5" x2="797.5" y2="485.5" stroke="#fff" stroke-width="1"/>
<line x1="826.5" y1="493.5" x2="797.5" y2="491.5" stroke="#fff" stroke-width="0.99"/>
<line x1="826.5" y1="498.5" x2="797.5" y2="499.5" stroke="#fff" stroke-width="0.99"/>
<line x1="826.5" y1="501.5" x2="797.5" y2="500.5" stroke="#fff" stroke-width="0.99"/>
<line x1="826.5" y1="503.5" x2="797.5" y2="503.5" stroke="#fff" stroke-width="1"/>
<line x1="826.5" y1="506.5" x2="797.5" y2="505.5" stroke="#fff" stroke-width="0.99"/>
<line x1="826.5" y1="510.5" x2="797.5" y2="508.5" stroke="#fff" stroke-width="0.99"/>
<line x1="826.5" y1="517.5" x2="797.5" y2="516.5" stroke="#fff" stroke-width="0.99"/>
<line x1="826.5" y1="522.5" x2="797.5" y2="522.5" stroke="#fff" stroke-width="1"/>
<line x1="826.5" y1="529.5" x2="797.5" y2="530.5" stroke="#fff" stroke-width="0.99"/>
<line x1="826.5" y1="554.5" x2="798.5" y2="561.5" stroke="#fff" stroke-width="0.99"/>
<line x1="826.5" y1="559.5" x2="798.5" y2="567.5" stroke="#fff" stroke-width="0.99"/>
<line x1="826.5" y1="567.5" x2="798.5" y2="576.5" stroke="#fff" stroke-width="0.99"/>
<line x1="826.5" y1="570.5" x2="798.5" y2="579.5" stroke="#fff" stroke-width="0.99"/>
<line x1="826.5" y1="573.5" x2="798.5" y2="583.5" stroke="#fff" stroke-width="0.99"/>
<line x1="826.5" y1="576.5" x2="798.5" y2="585.5" stroke="#fff" stroke-width="0.99"/>
<line x1="826.5" y1="579.5" x2="798.5" y2="589.5" stroke="#fff" stroke-width="0.99"/>
<line x1="826.5" y1="583.5" x2="798.5" y2="592.5" stroke="#fff" stroke-width="0.99"/>
<line x1="826.5" y1="587.5" x2="798.5" y2="595.5" stroke="#fff" stroke-width="0.99"/>
<line x1="826.5" y1="600.5" x2="797.5" y2="604.5" stroke="#fff" stroke-width="0.99"/>
<line x1="826.5" y1="613.5" x2="797.5" y2="614.5" stroke="#fff" stroke-width="0.99"/>
<line x1="826.5" y1="621.5" x2="797.5" y2="619.5" stroke="#fff" stroke-width="0.99"/>
<line x1="826.5" y1="622.5" x2="797.5" y2="619.5" stroke="#fff" stroke-width="0.99"/>
<line x1="826.5" y1="638.5" x2="797.5" y2="632.5" stroke="#fff" stroke-width="0.99"/>
<line x1="826.5" y1="641.5" x2="797.5" y2="637.5" stroke="#fff" stroke-width="0.99"/>
<line x1="826.5" y1="643.5" x2="797.5" y2="642.5" stroke="#fff" stroke-width="0.99"/>
<line x1="826.5" y1="652.5" x2="799.5" y2="662.5" stroke="#fff" stroke-width="0.99"/>
<line x1="826.5" y1="658.5" x2="801.5" y2="672.5" stroke="#fff" stroke-width="0.99"/>
<line x1="826.5" y1="664.5" x2="806.5" y2="684.5" stroke="#fff" stroke-width="0.99"/>
<line x1="826.5" y1="667.5" x2="810.5" y2="689.5" stroke="#fff" stroke-width="0.99"/>
<line x1="826.5" y1="670.5" x2="815.5" y2="695.5" stroke="#fff" stroke-width="0.99"/>
<line x1="826.5" y1="673.5" x2="818.5" y2="697.5" stroke="#fff" stroke-width="0.99"/>
<line x1="826.5" y1="676.5" x2="822.5" y2="700.5" stroke="#fff" stroke-width="0.99"/>
<line x1="826.5" y1="682.5" x2="833.5" y2="720.5" stroke="#fff" stroke-width="0.99"/>
<line x1="826.5" y1="692.5" x2="852.5" y2="705.5" stroke="#fff" stroke-width="0.99"/>
<line x1="826.5" y1="693.5" x2="852.5" y2="706.5" stroke="#fff" stroke-width="0.99"/>
<line x1="826.5" y1="704.5" x2="848.5" y2="723.5" stroke="#fff" stroke-width="0.99"/>
<line x1="826.5" y1="718.5" x2="852.5" y2="731.5" stroke="#fff" stroke-width="0.99"/>
<line x1="826.5" y1="722.5" x2="852.5" y2="736.5" stroke="#fff" stroke-width="0.99"/>
<line x1="826.5" y1="725.5" x2="852.5" y2="738.5" stroke="#fff" stroke-width="0.99"/>
<line x1="826.5" y1="729.5" x2="833.5" y2="760.5" stroke="#fff" stroke-width="0.99"/>
<line x1="826.5" y1="730.5" x2="835.5" y2="759.5" stroke="#fff" stroke-width="0.99"/>
<line x1="826.5" y1="731.5" x2="837.5" y2="757.5" stroke="#fff" stroke-width="0.99"/>
<line x1="61.5" y1="50.5" x2="61.5" y2="749.5" stroke="#fff" stroke-width="1"/>
<line x1="661.5" y1="50.5" x2="661.5" y2="755.5" stroke="#fff" stroke-width="1"/>
<line x1="61.5" y1="749.5" x2="661.5" y2="749.5" stroke="#fff" stroke-width="1"/>
<rect x="61" y="749" width="1" height="6" fill="#fff"/>
<rect x="61" y="788" width="1" height="4" fill="#fff"/>
<rect x="61" y="826" width="1" height="4" fill="#fff"/>
<rect x="121" y="749" width="1" height="6" fill="#fff"/>
<rect x="121" y="788" width="1" height="4" fill="#fff"/>
<rect x="121" y="826" width="1" height="4" fill="#fff"/>
<rect x="181" y="749" width="1" height="6" fill="#fff"/>
<rect x="181" y="788" width="1" height="4" fill="#fff"/>
<rect x="181" y="826" width="1" height="4" fill="#fff"/>
<rect x="241" y="749" width="1" height="6" fill="#fff"/>
<rect x="241" y="788" width="1" height="4" fill="#fff"/>
<rect x="241" y="826" width="1" height="4" fill="#fff"/>
<rect x="301" y="749" width="1" height="6" fill="#fff"/>
<rect x="301" y="788" width="1" height="4" fill="#fff"/>
<rect x="301" y="826" width="1" height="4" fill="#fff"/>
<rect x="361" y="749" width="1" height="6" fill="#fff"/>
<rect x="361" y="788" width="1" height="4" fill="#fff"/>
<rect x="361" y="826" width="1" height="4" fill="#fff"/>
<rect x="421" y="749" width="1" height="6" fill="#fff"/>
<rect x="421" y="788" width="1" height="4" fill="#fff"/>
<rect x="421" y="826" width="1" height="4" fill="#fff"/>
<rect x="481" y="749" width="1" height="6" fill="#fff"/>
<rect x="481" y="788" width="1" height="4" fill="#fff"/>
<rect x="481" y="826" width="1" height="4" fill="#fff"/>
<rect x="541" y="749" width="1" height="6" fill="#fff"/>
<rect x="541" y="788" width="1" height="4" fill="#fff"/>
<rect x="541" y="826" width="1" height="4" fill="#fff"/>
<rect x="601" y="749" width="1" height="6" fill="#fff"/>
<rect x="601" y="788" width="1" height="4" fill="#fff"/>
<rect x="601" y="826" width="1" height="4" fill="#fff"/>
<rect x="661" y="749" width="1" height="6" fill="#fff"/>
<rect x="661" y="788" width="1" height="4" fill="#fff"/>
<rect x="661" y="826" width="1" height="4" fill="#fff"/>
<rect x="61" y="863" width="1" height="4" fill="#fff"/>
<rect x="136" y="863" width="1" height="4" fill="#fff"/>
<rect x="211" y="863" width="1" height="4" fill="#fff"/>
<rect x="286" y="863" width="1" height="4" fill="#fff"/>
<rect x="361" y="863" width="1" height="4" fill="#fff"/>
<rect x="436" y="863" width="1" height="4" fill="#fff"/>
<rect x="511" y="863" width="1" height="4" fill="#fff"/>
<rect x="586" y="863" width="1" height="4" fill="#fff"/>
<rect x="661" y="863" width="1" height="4" fill="#fff"/>
<line x1="761.5" y1="39.5" x2="761.5" y2="769.5" stroke="#00ff00" stroke-width="1"/>
<line x1="826.5" y1="39.5" x2="826.5" y2="769.5" stroke="#ff0080" stroke-width="1"/>
</svg>
<div class="t" style="left:62px;top:14px;transform:none;font-size:16px;font-weight:bold;line-height:18px;height:18px;letter-spacing:0.25px">Station: 06610 Payerne (LSMP)</div>
<div class="t" style="left:324px;top:14px;transform:none;font-size:16px;font-weight:bold;line-height:18px;height:18px;letter-spacing:0.25px">Date: 13.06.2014</div>
<div class="t" style="left:474px;top:14px;transform:none;font-size:16px;font-weight:bold;line-height:18px;height:18px">Time: 2300Z</div>
<div class="t r ax" style="left:10px;width:42px;top:42px;letter-spacing:-0.3px">100</div>
<div class="t r ax" style="left:10px;width:42px;top:313px;letter-spacing:-0.3px">200</div>
<div class="t r ax" style="left:10px;width:42px;top:441px;letter-spacing:-0.3px">300</div>
<div class="t r ax" style="left:10px;width:42px;top:521px;letter-spacing:-0.3px">400</div>
<div class="t r ax" style="left:10px;width:42px;top:578px;letter-spacing:-0.3px">500</div>
<div class="t r ax" style="left:10px;width:42px;top:622px;letter-spacing:-0.3px">600</div>
<div class="t r ax" style="left:10px;width:42px;top:657px;letter-spacing:-0.3px">700</div>
<div class="t r ax" style="left:10px;width:42px;top:686px;letter-spacing:-0.3px">800</div>
<div class="t r ax" style="left:10px;width:42px;top:711px;letter-spacing:-0.3px">900</div>
<div class="t r ax" style="left:10px;width:42px;top:732px;letter-spacing:-0.3px">1000</div>
<div class="t ax" style="left:670px;top:38px;letter-spacing:-0.3px">16450m</div>
<div class="t ax" style="left:670px;top:309px;letter-spacing:-0.3px">12060m</div>
<div class="t ax" style="left:670px;top:437px;letter-spacing:-0.3px">9440m</div>
<div class="t ax" style="left:670px;top:517px;letter-spacing:-0.3px">7430m</div>
<div class="t ax" style="left:670px;top:574px;letter-spacing:-0.3px">5770m</div>
<div class="t ax" style="left:670px;top:618px;letter-spacing:-0.3px">4339m</div>
<div class="t ax" style="left:670px;top:653px;letter-spacing:-0.3px">3129m</div>
<div class="t ax" style="left:670px;top:682px;letter-spacing:-0.3px">2029m</div>
<div class="t ax" style="left:670px;top:707px;letter-spacing:-0.3px">1044m</div>
<div class="t c ax" style="left:29px;width:60px;top:756px;letter-spacing:-0.3px">-50</div>
<div class="t c ax" style="left:89px;width:60px;top:756px;letter-spacing:-0.3px">-40</div>
<div class="t c ax" style="left:149px;width:60px;top:756px;letter-spacing:-0.3px">-30</div>
<div class="t c ax" style="left:209px;width:60px;top:756px;letter-spacing:-0.3px">-20</div>
<div class="t c ax" style="left:269px;width:60px;top:756px;letter-spacing:-0.3px">-10</div>
<div class="t c ax" style="left:331px;width:60px;top:756px;letter-spacing:-0.3px">0</div>
<div class="t c ax" style="left:391px;width:60px;top:756px;letter-spacing:-0.3px">10</div>
<div class="t c ax" style="left:451px;width:60px;top:756px;letter-spacing:-0.3px">20</div>
<div class="t c ax" style="left:511px;width:60px;top:756px;letter-spacing:-0.3px">30</div>
<div class="t c ax" style="left:571px;width:60px;top:756px;letter-spacing:-0.3px">40</div>
<div class="t c ax" style="left:631px;width:60px;top:756px;letter-spacing:-0.3px">50</div>
<div class="t c ax" style="left:161px;width:400px;top:770px;letter-spacing:0.08px">Temperature, Dewpoint  [ °C ]</div>
<div class="t c ax" style="left:31px;width:60px;top:794px;letter-spacing:-0.3px">0</div>
<div class="t c ax" style="left:91px;width:60px;top:794px;letter-spacing:-0.3px">10</div>
<div class="t c ax" style="left:151px;width:60px;top:794px;letter-spacing:-0.3px">20</div>
<div class="t c ax" style="left:211px;width:60px;top:794px;letter-spacing:-0.3px">30</div>
<div class="t c ax" style="left:271px;width:60px;top:794px;letter-spacing:-0.3px">40</div>
<div class="t c ax" style="left:331px;width:60px;top:794px;letter-spacing:-0.3px">50</div>
<div class="t c ax" style="left:391px;width:60px;top:794px;letter-spacing:-0.3px">60</div>
<div class="t c ax" style="left:451px;width:60px;top:794px;letter-spacing:-0.3px">70</div>
<div class="t c ax" style="left:511px;width:60px;top:794px;letter-spacing:-0.3px">80</div>
<div class="t c ax" style="left:571px;width:60px;top:794px;letter-spacing:-0.3px">90</div>
<div class="t c ax" style="left:631px;width:60px;top:794px;letter-spacing:-0.3px">100</div>
<div class="t c ax" style="left:161px;width:400px;top:807px;letter-spacing:0.13px">Windspeed  [ knt ]</div>
<div class="t c ax" style="left:31px;width:60px;top:831px;letter-spacing:-0.3px">0</div>
<div class="t c ax" style="left:91px;width:60px;top:831px;letter-spacing:-0.3px">300</div>
<div class="t c ax" style="left:151px;width:60px;top:831px;letter-spacing:-0.3px">600</div>
<div class="t c ax" style="left:211px;width:60px;top:831px;letter-spacing:-0.3px">900</div>
<div class="t c ax" style="left:271px;width:60px;top:831px;letter-spacing:-0.3px">1200</div>
<div class="t c ax" style="left:331px;width:60px;top:831px;letter-spacing:-0.3px">1500</div>
<div class="t c ax" style="left:391px;width:60px;top:831px;letter-spacing:-0.3px">1800</div>
<div class="t c ax" style="left:451px;width:60px;top:831px;letter-spacing:-0.3px">2100</div>
<div class="t c ax" style="left:511px;width:60px;top:831px;letter-spacing:-0.3px">2400</div>
<div class="t c ax" style="left:571px;width:60px;top:831px;letter-spacing:-0.3px">2700</div>
<div class="t c ax" style="left:631px;width:60px;top:831px;letter-spacing:-0.3px">3000</div>
<div class="t c ax" style="left:161px;width:400px;top:845px;letter-spacing:-0.07px">CAPE, CINH * 5  [ J/kg ]</div>
<div class="t c ax" style="left:29px;width:60px;top:868px;letter-spacing:-0.3px">-100</div>
<div class="t c ax" style="left:104px;width:60px;top:868px;letter-spacing:-0.3px">-50</div>
<div class="t c ax" style="left:181px;width:60px;top:868px;letter-spacing:-0.3px">0</div>
<div class="t c ax" style="left:256px;width:60px;top:868px;letter-spacing:-0.3px">50</div>
<div class="t c ax" style="left:331px;width:60px;top:868px;letter-spacing:-0.3px">100</div>
<div class="t c ax" style="left:406px;width:60px;top:868px;letter-spacing:-0.3px">150</div>
<div class="t c ax" style="left:481px;width:60px;top:868px;letter-spacing:-0.3px">200</div>
<div class="t c ax" style="left:556px;width:60px;top:868px;letter-spacing:-0.3px">250</div>
<div class="t c ax" style="left:631px;width:60px;top:868px;letter-spacing:-0.3px">300</div>
<div class="t c ax" style="left:161px;width:400px;top:881px;letter-spacing:0.14px">Storm Relative Helicity  [ m^2/s^2 ]</div>
<div class="t c" style="left:67px;width:44px;top:608px;color:#ffff00">CAPE</div>
<div class="t c" style="left:67px;width:58px;top:637px;letter-spacing:-0.2px;color:#c86400">CINH * 5</div>
<div class="t c" style="left:625px;width:31px;top:710px;color:#ff00ff">LCL</div>
<div class="t c" style="left:731px;width:60px;top:20px;font-size:13px;-webkit-text-stroke:0.45px #00ff00;transform:scaleY(1.14);transform-origin:50% 80%;color:#00ff00">OBS</div>
<div class="t c" style="left:796px;width:60px;top:20px;font-size:13px;-webkit-text-stroke:0.45px #ff0080;transform:scaleY(1.14);transform-origin:50% 80%;color:#ff0080">SR</div>
<div class="t u" style="left:894px;top:27px;letter-spacing:-0.123px;">Parameter</div>
<div class="t p u r" style="left:1024px;width:100px;top:27px">Value LCL</div>
<div class="t p u r" style="left:1114px;width:100px;top:27px">Value CCL</div>
<div class="t p u" style="left:1230px;top:27px">Unit</div>
<div class="t" style="left:894px;top:49px;letter-spacing:-0.157px;">Convective Temperature:</div>
<div class="t p r y" style="left:1044px;width:80px;top:49px">23.47</div>
<div class="t p" style="left:1230px;top:49px">[°C]</div>
<div class="t" style="left:894px;top:66px;letter-spacing:-0.098px;">Snowfall Height:</div>
<div class="t p r " style="left:1044px;width:80px;top:66px">2936.61</div>
<div class="t p" style="left:1230px;top:66px">[m]</div>
<div class="t u" style="left:894px;top:91px;letter-spacing:0.055px;">Parcels: Using Surface Values LCL + CCL</div>
<div class="t" style="left:894px;top:111px;letter-spacing:-0.126px;">Lifted Index:</div>
<div class="t p r rd" style="left:1044px;width:80px;top:111px">0.58</div>
<div class="t p r rd" style="left:1134px;width:80px;top:111px">-2.93</div>
<div class="t p" style="left:1230px;top:111px">[°C]</div>
<div class="t" style="left:894px;top:128px;letter-spacing:0.077px;">CAPE:</div>
<div class="t p r g" style="left:1044px;width:80px;top:128px">1.13</div>
<div class="t p r g" style="left:1134px;width:80px;top:128px">540.40</div>
<div class="t p" style="left:1230px;top:128px">[J/kg]</div>
<div class="t" style="left:894px;top:145px;letter-spacing:-0.418px;">CINH:</div>
<div class="t p r y" style="left:1044px;width:80px;top:145px">227.38</div>
<div class="t p" style="left:1230px;top:145px">[J/kg]</div>
<div class="t" style="left:894px;top:162px;letter-spacing:0.182px;">CAPE Virt.:</div>
<div class="t p r g" style="left:1044px;width:80px;top:162px">1.64</div>
<div class="t p r g" style="left:1134px;width:80px;top:162px">491.67</div>
<div class="t p" style="left:1230px;top:162px">[J/kg]</div>
<div class="t" style="left:894px;top:179px;letter-spacing:-0.043px;">CINH Virt.:</div>
<div class="t p r y" style="left:1044px;width:80px;top:179px">214.86</div>
<div class="t p" style="left:1230px;top:179px">[J/kg]</div>
<div class="t" style="left:894px;top:196px;letter-spacing:0.063px;">DCAPE (LFS = 719mB):</div>
<div class="t p r g" style="left:1044px;width:80px;top:196px">249.68</div>
<div class="t p" style="left:1230px;top:196px">[J/kg]</div>
<div class="t" style="left:894px;top:213px;letter-spacing:-0.109px;">850-600 Lapse Rate:</div>
<div class="t p r y" style="left:1044px;width:80px;top:213px">17.46</div>
<div class="t p" style="left:1230px;top:213px">[°C]</div>
<div class="t" style="left:894px;top:230px;letter-spacing:0.004px;">Fawbush-Miller Hail Size:</div>
<div class="t p r g" style="left:1044px;width:80px;top:230px">0.00</div>
<div class="t p" style="left:1230px;top:230px">[cm]</div>
<div class="t" style="left:894px;top:247px;letter-spacing:0.023px;">Sig. Hail Param. (SHIP):</div>
<div class="t p r g" style="left:1044px;width:80px;top:247px">0.06</div>
<div class="t p" style="left:1230px;top:247px">[1]</div>
<div class="t" style="left:894px;top:264px;letter-spacing:0.062px;">Max. Hail Size (new, new2, old):</div>
<div class="t p r y" style="left:1048px;width:80px;top:264px">2.52,</div>
<div class="t p r y" style="left:1085px;width:80px;top:264px">1.47,</div>
<div class="t p r g" style="left:1118px;width:80px;top:264px">0.50</div>
<div class="t p" style="left:1230px;top:264px">[cm]</div>
<div class="t" style="left:894px;top:284px;letter-spacing:0.023px;">LCL / CCL (AGL):</div>
<div class="t p r rd" style="left:1044px;width:80px;top:284px">572.18</div>
<div class="t p r y" style="left:1134px;width:80px;top:284px">1318.94</div>
<div class="t p" style="left:1230px;top:284px">[m]</div>
<div class="t" style="left:894px;top:301px;letter-spacing:-0.180px;">Convective Height:</div>
<div class="t p r g" style="left:1044px;width:80px;top:301px">1.87</div>
<div class="t p r rd" style="left:1134px;width:80px;top:301px">8.68</div>
<div class="t p" style="left:1230px;top:301px">[km]</div>
<div class="t u" style="left:894px;top:326px;letter-spacing:-0.202px;">Convective Indices</div>
<div class="t" style="left:894px;top:346px;letter-spacing:-0.079px;">Showalter Index:</div>
<div class="t p r y" style="left:1044px;width:80px;top:346px">1.05</div>
<div class="t p" style="left:1230px;top:346px">[°C]</div>
<div class="t" style="left:894px;top:363px;letter-spacing:-0.108px;">Modified Thompson Index:</div>
<div class="t p r g" style="left:1044px;width:80px;top:363px">19.46</div>
<div class="t p" style="left:1230px;top:363px">[°C]</div>
<div class="t" style="left:894px;top:380px;letter-spacing:0.071px;">Total Totals Index:</div>
<div class="t p r rd" style="left:1044px;width:80px;top:380px">49.00</div>
<div class="t p" style="left:1230px;top:380px">[°C]</div>
<div class="t" style="left:894px;top:397px;letter-spacing:-0.035px;">KO Index:</div>
<div class="t p r rd" style="left:1044px;width:80px;top:397px">-8.13</div>
<div class="t p" style="left:1230px;top:397px">[1]</div>
<div class="t" style="left:894px;top:414px;letter-spacing:-0.200px;">Craven SigSvr / 1000:</div>
<div class="t p r g" style="left:1044px;width:80px;top:414px">0.02</div>
<div class="t p" style="left:1230px;top:414px">[m^3/s^3]</div>
<div class="t" style="left:894px;top:431px;letter-spacing:0.027px;">SCP RM (new, old):</div>
<div class="t p r g" style="left:1044px;width:80px;top:431px">0.08</div>
<div class="t p r " style="left:1048px;width:80px;top:431px">,</div>
<div class="t p r g" style="left:1081px;width:80px;top:431px">0.05</div>
<div class="t p" style="left:1230px;top:431px">[1]</div>
<div class="t" style="left:894px;top:448px;letter-spacing:0.046px;">SCP LM (new, old):</div>
<div class="t p r g" style="left:1044px;width:80px;top:448px">0.10</div>
<div class="t p r " style="left:1048px;width:80px;top:448px">,</div>
<div class="t p r g" style="left:1081px;width:80px;top:448px">0.00</div>
<div class="t p" style="left:1230px;top:448px">[1]</div>
<div class="t" style="left:894px;top:465px;letter-spacing:-0.009px;">STP (new, old):</div>
<div class="t p r g" style="left:1044px;width:80px;top:465px">0.00</div>
<div class="t p r " style="left:1048px;width:80px;top:465px">,</div>
<div class="t p r g" style="left:1081px;width:80px;top:465px">0.00</div>
<div class="t p" style="left:1230px;top:465px">[1]</div>
<div class="t" style="left:894px;top:482px;letter-spacing:0.002px;">SB STP (fix):</div>
<div class="t p r g" style="left:1044px;width:80px;top:482px">0.00</div>
<div class="t p" style="left:1230px;top:482px">[1]</div>
<div class="t" style="left:894px;top:499px;letter-spacing:-0.077px;">Derecho Comp Param:</div>
<div class="t p r g" style="left:1044px;width:80px;top:499px">0.02</div>
<div class="t p" style="left:1230px;top:499px">[1]</div>
<div class="t" style="left:894px;top:516px;letter-spacing:0.222px;">MCS 18m/s (MMP, MSP):</div>
<div class="t p r g" style="left:1044px;width:80px;top:516px">69.78</div>
<div class="t p r " style="left:1048px;width:80px;top:516px">,</div>
<div class="t p r " style="left:1069px;width:80px;top:516px">---</div>
<div class="t p" style="left:1230px;top:516px">[%]</div>
<div class="t" style="left:894px;top:533px;letter-spacing:-0.011px;">Exp. Supercell Index CH:</div>
<div class="t p r g" style="left:1044px;width:80px;top:533px">0.17</div>
<div class="t p" style="left:1230px;top:533px">[1]</div>
<div class="t" style="left:894px;top:550px;letter-spacing:0.033px;">SWISS 12 Index:</div>
<div class="t p r rd" style="left:1044px;width:80px;top:550px">-1.07</div>
<div class="t p" style="left:1230px;top:550px">[1]</div>
<div class="t u" style="left:894px;top:575px;letter-spacing:0.004px;">Wind Parameters</div>
<div class="t" style="left:894px;top:595px;letter-spacing:-0.006px;">Storm Direction:</div>
<div class="t p r " style="left:1044px;width:80px;top:595px">354.10</div>
<div class="t p" style="left:1230px;top:595px">[°]</div>
<div class="t" style="left:894px;top:612px;letter-spacing:0.029px;">Storm Motion:</div>
<div class="t p r y" style="left:1044px;width:80px;top:612px">15.16</div>
<div class="t p" style="left:1230px;top:612px">[knt]</div>
<div class="t" style="left:894px;top:632px;letter-spacing:0.070px;">SR Wind Sfc-2km:</div>
<div class="t p r g" style="left:1044px;width:80px;top:632px">15.85</div>
<div class="t p" style="left:1230px;top:632px">[knt]</div>
<div class="t" style="left:894px;top:649px;letter-spacing:0.089px;">SR Wind 4km-6km:</div>
<div class="t p r g" style="left:1044px;width:80px;top:649px">16.27</div>
<div class="t p" style="left:1230px;top:649px">[knt]</div>
<div class="t" style="left:894px;top:666px;letter-spacing:0.133px;">SR Wind 9km-11km:</div>
<div class="t p r g" style="left:1044px;width:80px;top:666px">42.81</div>
<div class="t p" style="left:1230px;top:666px">[knt] CL</div>
<div class="t" style="left:894px;top:686px;letter-spacing:-0.124px;">Effective Shear 6000:</div>
<div class="t p r rd" style="left:1044px;width:80px;top:686px">41.40</div>
<div class="t p" style="left:1230px;top:686px">[knt]</div>
<div class="t" style="left:894px;top:706px;letter-spacing:-0.042px;">Bulk Richardson Number:</div>
<div class="t p r g" style="left:1044px;width:80px;top:706px">0.03</div>
<div class="t p r y" style="left:1134px;width:80px;top:706px">16.21</div>
<div class="t p" style="left:1230px;top:706px">[1]</div>
<div class="t" style="left:894px;top:726px;letter-spacing:-0.070px;">3km Effective SRH:</div>
<div class="t p r g" style="left:1044px;width:80px;top:726px">63.68</div>
<div class="t p" style="left:1230px;top:726px">[m^2/s^2]</div>
<div class="t" style="left:894px;top:743px;letter-spacing:0.057px;">Max 3km SRH (Sfc-2km):</div>
<div class="t p r g" style="left:1044px;width:80px;top:743px">71.36</div>
<div class="t p" style="left:1230px;top:743px">[m^2/s^2]</div>
<div class="t" style="left:894px;top:760px;letter-spacing:0.036px;">Max 3km SRH Level AGL:</div>
<div class="t p r g" style="left:1044px;width:80px;top:760px">1518.00</div>
<div class="t p" style="left:1230px;top:760px">[m]</div>
<div class="t" style="left:894px;top:780px;letter-spacing:0.053px;">3km Energy Helicity Index:</div>
<div class="t p r g" style="left:1044px;width:80px;top:780px">0.00</div>
<div class="t p r g" style="left:1134px;width:80px;top:780px">0.17</div>
<div class="t p" style="left:1230px;top:780px">[1]</div>
<div class="t" style="left:894px;top:797px;letter-spacing:0.190px;">3km Vorticity Gen. Pot.:</div>
<div class="t p r g" style="left:1044px;width:80px;top:797px">0.00</div>
<div class="t p r g" style="left:1134px;width:80px;top:797px">0.07</div>
<div class="t p" style="left:1230px;top:797px">[m/s^2]</div>
<div class="sw" style="left:729px;top:827px;background:#ff0000"></div>
<div class="t" style="left:753px;top:823px;color:#ff0000;letter-spacing:-0.098px;">Temperature Profile</div>
<div class="sw" style="left:729px;top:847px;background:#00ffff"></div>
<div class="t" style="left:753px;top:843px;color:#00ffff;letter-spacing:-0.155px;">Dewpoint Profile</div>
<div class="sw" style="left:729px;top:867px;background:#00ff00"></div>
<div class="t" style="left:753px;top:863px;color:#00ff00;letter-spacing:-0.019px;">OBS Windspeed Profile</div>
<div class="sw" style="left:729px;top:887px;background:#ff0080"></div>
<div class="t" style="left:753px;top:883px;color:#ff0080;letter-spacing:-0.050px;">SR Windspeed Profile</div>
<div class="sw" style="left:729px;top:907px;background:#c8c800"></div>
<div class="t" style="left:753px;top:903px;color:#c8c800;letter-spacing:-0.008px;">Sfc-3km Storm Relative Helicity Profile</div>
<div class="sw" style="left:729px;top:927px;background:#484800"></div>
<div class="t" style="left:753px;top:923px;color:#484800;letter-spacing:0.000px;">Effective Layer (CAPE &gt;= 100 J/kg)</div>
<div class="sw" style="left:1079px;top:827px;background:#00ff00"></div>
<div class="t" style="left:1103px;top:823px;color:#00ff00;letter-spacing:-0.125px;">No / Non Severe Thunderstorms</div>
<div class="sw" style="left:1079px;top:847px;background:#ffff00"></div>
<div class="t" style="left:1103px;top:843px;color:#ffff00;letter-spacing:-0.025px;">Scattered / Moderate Thunderstorms</div>
<div class="sw" style="left:1079px;top:867px;background:#ff0000"></div>
<div class="t" style="left:1103px;top:863px;color:#ff0000;letter-spacing:-0.080px;">Widespread / Severe Thunderstorms</div>
</body></html>
